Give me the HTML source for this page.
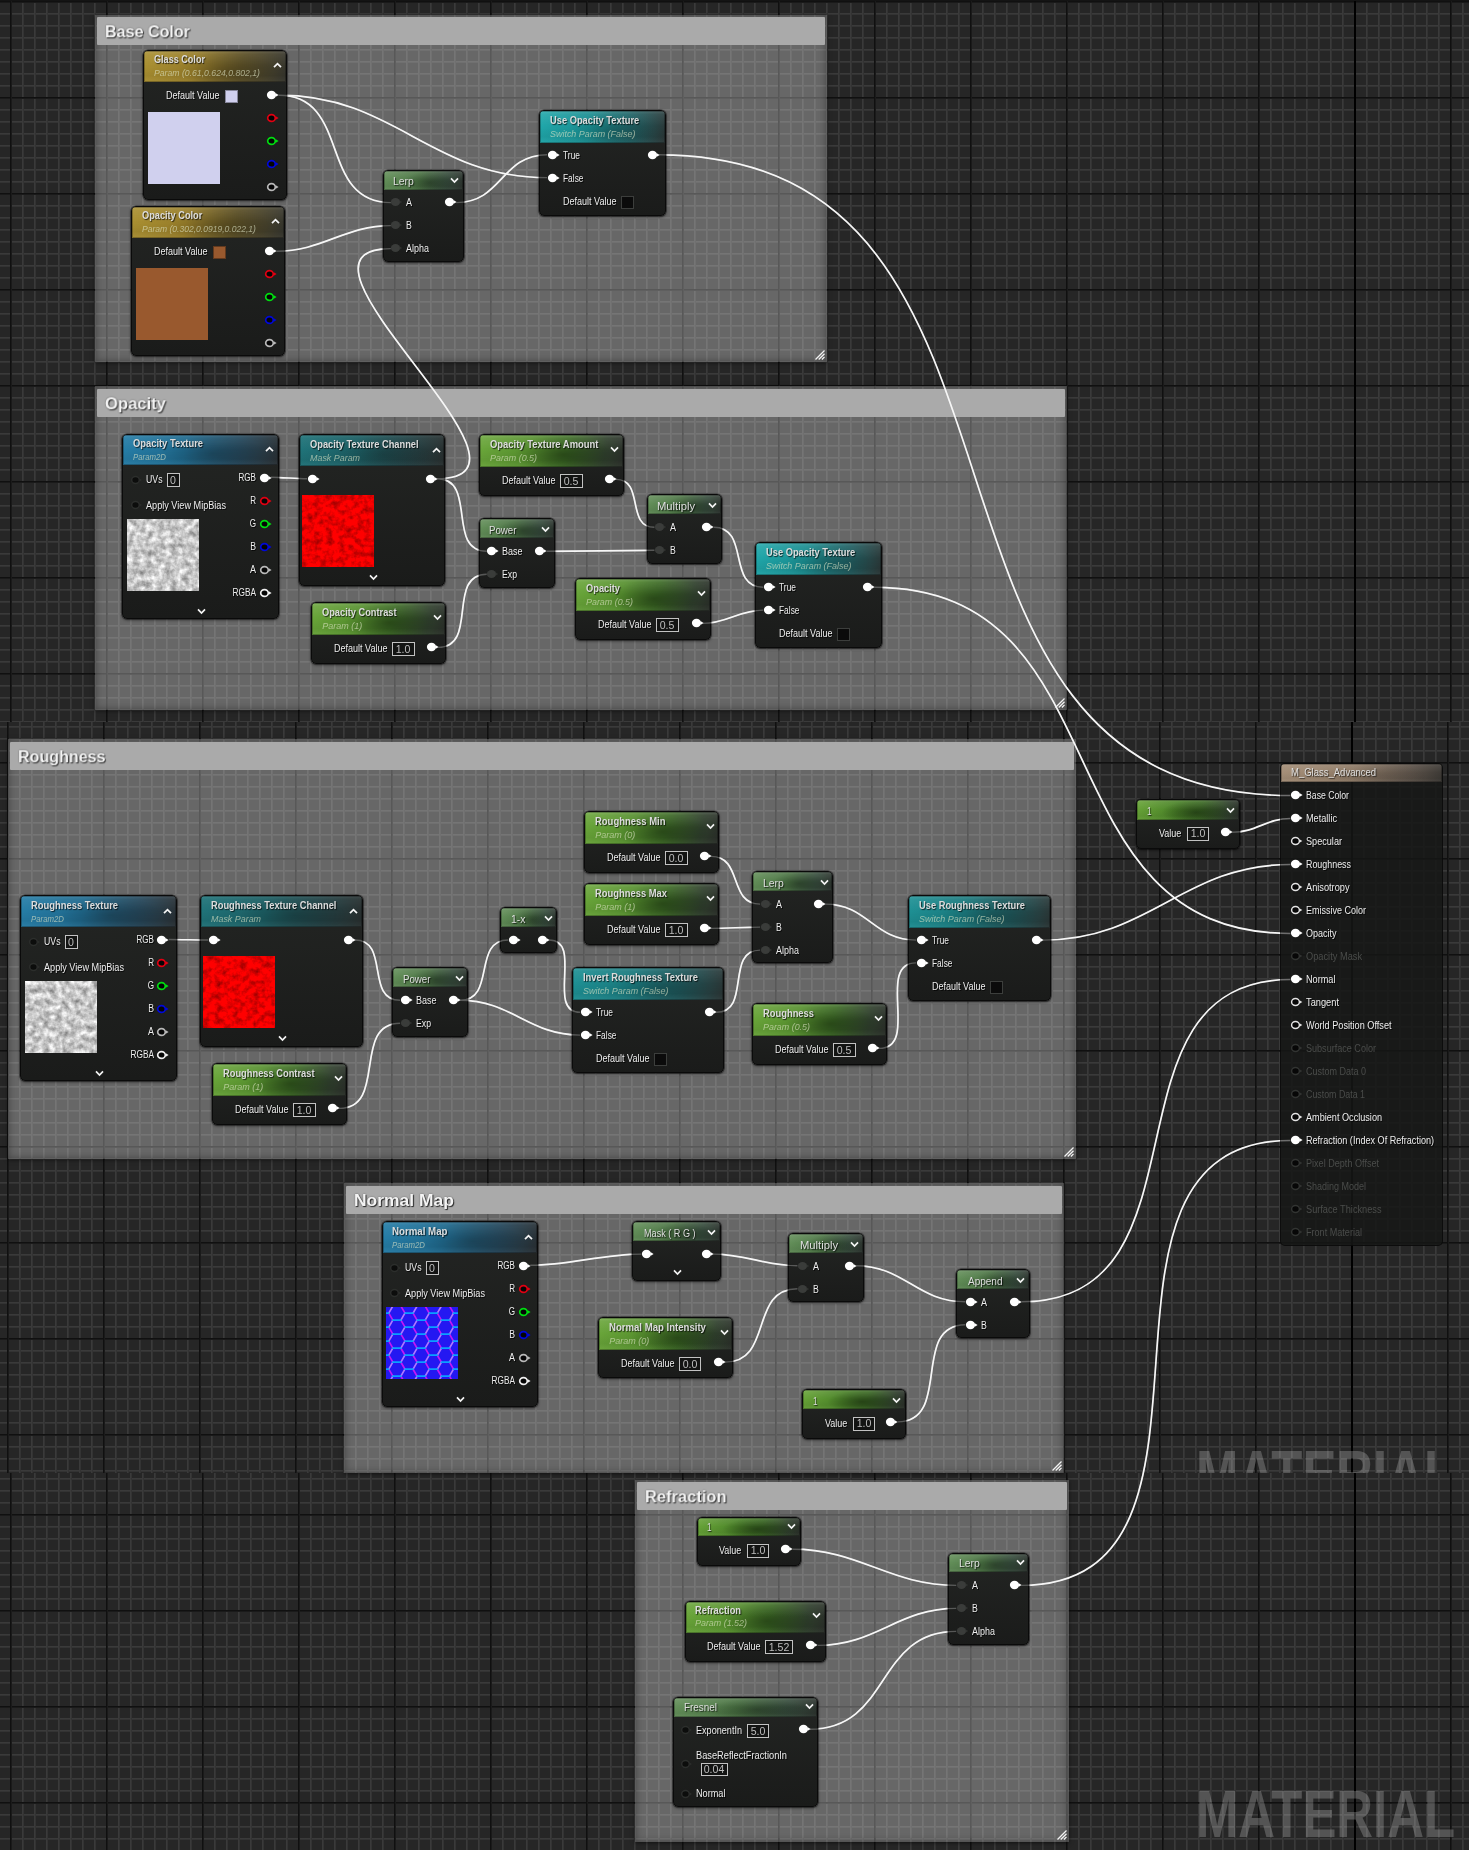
<!DOCTYPE html>
<html lang="en"><head><meta charset="utf-8"><title>M_Glass_Advanced - Material Graph</title>
<style>
html,body{margin:0;padding:0;background:#262626}
body{width:1469px;height:1850px;position:relative;overflow:hidden;font-family:"Liberation Sans",sans-serif}
.bg{position:absolute;left:0;width:1469px;overflow:hidden;background-color:#262626;
background-image:linear-gradient(90deg,#101010 1px,#1a1a1a 1px,#1a1a1a 2px,transparent 2px),linear-gradient(#101010 1px,#1a1a1a 1px,#1a1a1a 2px,transparent 2px),linear-gradient(90deg,#3a3a3a 1px,#333333 1px,#333333 2px,transparent 2px),linear-gradient(#3a3a3a 1px,#333333 1px,#333333 2px,transparent 2px);
background-size:96px 96px,96px 96px,12px 12px,12px 12px}
.bg i{position:absolute;top:0;bottom:0;width:2px;background:#000}
.wm{position:absolute;font-weight:bold;font-size:66.4px;line-height:1;color:rgba(255,255,255,0.215);white-space:nowrap;transform-origin:0 0;letter-spacing:0}
.c{position:absolute;box-sizing:border-box}
.cb{position:absolute;left:0;top:0;right:0;bottom:0;background:rgba(255,255,255,0.30);box-shadow:inset 0 0 7px 1px rgba(0,0,0,0.34),0 1px 4px rgba(0,0,0,0.55)}
.ch{position:absolute;left:2px;right:2px;height:28px;background:#aaaaaa;border-radius:1px}
.ct{font-weight:bold;font-size:17.4px;color:#f4f4f4;text-shadow:1px 1px 1px rgba(0,0,0,0.75),0 0 2px rgba(0,0,0,0.4)}
.grip{position:absolute;right:2px;bottom:2px}
.t{position:absolute;white-space:nowrap;line-height:1;display:block}
.n{position:absolute;box-sizing:border-box;border:1px solid #0a0a0a;border-radius:5px;background:linear-gradient(#232523,#1a1b1a);box-shadow:0 0 0 0.6px rgba(0,0,0,0.55),0 1px 3px rgba(0,0,0,0.6);overflow:hidden}
.n.res{background:rgba(22,23,21,0.84);border-color:rgba(0,0,0,0.5);box-shadow:none}
.in{position:absolute;width:0;height:0;will-change:transform}
.h{position:absolute;left:0;top:0;right:0;box-shadow:inset 0 0 0 1px rgba(0,0,0,0.28)}
.h.gold{background:linear-gradient(rgba(255,255,255,0.16) 0,rgba(255,255,255,0.072) 10%,rgba(255,255,255,0) 48%,rgba(0,0,0,0.06) 80%,rgba(255,255,255,0.03) 100%),radial-gradient(ellipse 34% 60% at 58% 62%,rgba(0,0,0,0.18),rgba(0,0,0,0) 100%),linear-gradient(100deg,#ab9132 0%,#967c29 36%,#5c5026 68%,#34342d 100%)}
.h.green{background:linear-gradient(rgba(255,255,255,0.2) 0,rgba(255,255,255,0.090) 10%,rgba(255,255,255,0) 48%,rgba(0,0,0,0.06) 80%,rgba(255,255,255,0.03) 100%),radial-gradient(ellipse 34% 60% at 58% 62%,rgba(0,0,0,0.34),rgba(0,0,0,0) 100%),linear-gradient(100deg,#6aa63a 0%,#56902e 35%,#3f7026 60%,#2e3e2b 86%,#2a2e29 100%)}
.h.green2{background:linear-gradient(rgba(255,255,255,0.2) 0,rgba(255,255,255,0.090) 10%,rgba(255,255,255,0) 48%,rgba(0,0,0,0.06) 80%,rgba(255,255,255,0.03) 100%),radial-gradient(ellipse 34% 60% at 58% 62%,rgba(0,0,0,0.4),rgba(0,0,0,0) 100%),linear-gradient(100deg,#68a438 0%,#4a8228 40%,#3f7026 62%,#2e3e2b 88%,#2a2e29 100%)}
.h.mgreen{background:linear-gradient(rgba(255,255,255,0.22) 0,rgba(255,255,255,0.099) 10%,rgba(255,255,255,0) 48%,rgba(0,0,0,0.06) 80%,rgba(255,255,255,0.03) 100%),radial-gradient(ellipse 34% 60% at 58% 62%,rgba(0,0,0,0.3),rgba(0,0,0,0) 100%),linear-gradient(100deg,#64905a 0%,#4b7444 45%,#364c3c 78%,#2b312d 100%)}
.h.teal{background:linear-gradient(rgba(255,255,255,0.18) 0,rgba(255,255,255,0.081) 10%,rgba(255,255,255,0) 48%,rgba(0,0,0,0.06) 80%,rgba(255,255,255,0.03) 100%),radial-gradient(ellipse 34% 60% at 58% 62%,rgba(0,0,0,0.16),rgba(0,0,0,0) 100%),linear-gradient(100deg,#20a8ab 0%,#1a8d90 40%,#1f6063 72%,#2a3535 100%)}
.h.teal2{background:linear-gradient(rgba(255,255,255,0.16) 0,rgba(255,255,255,0.072) 10%,rgba(255,255,255,0) 48%,rgba(0,0,0,0.06) 80%,rgba(255,255,255,0.03) 100%),radial-gradient(ellipse 34% 60% at 58% 62%,rgba(0,0,0,0.16),rgba(0,0,0,0) 100%),linear-gradient(100deg,#1e9195 0%,#1a797d 40%,#1f5659 72%,#2a3434 100%)}
.h.dteal{background:linear-gradient(rgba(255,255,255,0.12) 0,rgba(255,255,255,0.054) 10%,rgba(255,255,255,0) 48%,rgba(0,0,0,0.06) 80%,rgba(255,255,255,0.03) 100%),radial-gradient(ellipse 34% 60% at 58% 62%,rgba(0,0,0,0.18),rgba(0,0,0,0) 100%),linear-gradient(100deg,#20747a 0%,#1c5e63 40%,#234144 75%,#282e2e 100%)}
.h.blue{background:linear-gradient(rgba(255,255,255,0.14) 0,rgba(255,255,255,0.063) 10%,rgba(255,255,255,0) 48%,rgba(0,0,0,0.06) 80%,rgba(255,255,255,0.03) 100%),radial-gradient(ellipse 34% 60% at 58% 62%,rgba(0,0,0,0.2),rgba(0,0,0,0) 100%),linear-gradient(100deg,#267ea8 0%,#206a8e 40%,#25485c 74%,#292f33 100%)}
.h.tan{background:linear-gradient(rgba(255,255,255,0.16) 0,rgba(255,255,255,0.072) 10%,rgba(255,255,255,0) 48%,rgba(0,0,0,0.06) 80%,rgba(255,255,255,0.03) 100%),radial-gradient(ellipse 34% 60% at 58% 62%,rgba(0,0,0,0.1),rgba(0,0,0,0) 100%),linear-gradient(100deg,#a58f78 0%,#907c68 45%,#5c5249 80%,#3b3834 100%)}
.tb{font-weight:bold;font-size:10.5px;color:#dcdcdc;text-shadow:1px 1px 1px rgba(0,0,0,0.7)}
.tr{font-size:10.5px;color:#dedede;text-shadow:1px 1px 1px rgba(0,0,0,0.7)}
.ts{font-style:italic;font-size:9px;color:rgba(225,230,200,0.62)}
.lb{font-size:10px;color:#ededed;text-shadow:1px 1px 0 rgba(0,0,0,0.8)}
.vb{font-size:11.5px;color:#bdbdbd}
.p{position:absolute;overflow:visible}
.vbx{position:absolute;box-sizing:border-box;border:1px solid #c2c2c2;background:#131413}
.cbx{position:absolute;box-sizing:border-box;width:13px;height:13px;border:1px solid #3c3e3c;background:#0b0b0b}
.sw{position:absolute;width:13px;height:13px;box-sizing:border-box;border:1px solid rgba(0,0,0,0.35)}
.pv{position:absolute;width:72px;height:72px;display:block;overflow:hidden}
.pv svg{display:block}
svg.w{position:absolute;left:0;top:0}
</style></head>
<body>
<div class="bg" style="top:0px;height:722px;background-position:10px 0,0 1px,10px 0,0 1px"><i style="left:1354px"></i></div>
<div class="bg" style="top:722px;height:751px;background-position:7px 0,0 40px,7px 0,0 4px"><i style="left:1351px"></i></div>
<div class="bg" style="top:1473px;height:377px;background-position:10px 0,0 41px,10px 0,0 5px"><i style="left:1354px"></i></div>
<div style="position:absolute;left:0;top:0;width:1469px;height:1px;background:#141414"></div>
<div style="position:absolute;left:0;top:1440px;width:1469px;height:33px;overflow:hidden"><span class="wm" style="left:1195.5px;top:0.5px;transform:scaleX(0.766)">MATERIAL</span></div>
<span class="wm" style="left:1195.5px;top:1780.6px;transform:scaleX(0.766)">MATERIAL</span>
<div class="c" style="left:95px;top:15px;width:732px;height:347px"><div class="cb"></div><div class="ch" style="top:2px"></div><div class="in"><span class="t ct" style="left:9.9px;top:16.9px;transform:translateY(-50%) scaleX(0.925);transform-origin:0 50%;">Base Color</span></div><svg class="grip" width="10" height="10" viewBox="0 0 10 10"><path d="M0.5 9.5L9.5 0.5M3.7 9.5L9.5 3.7M6.9 9.5L9.5 6.9" stroke="#f4f4f4" stroke-width="1.3" fill="none"/></svg></div>
<div class="c" style="left:95px;top:386px;width:972px;height:324px"><div class="cb"></div><div class="ch" style="top:3px"></div><div class="in"><span class="t ct" style="left:9.9px;top:17.9px;transform:translateY(-50%) scaleX(0.956);transform-origin:0 50%;">Opacity</span></div><svg class="grip" width="10" height="10" viewBox="0 0 10 10"><path d="M0.5 9.5L9.5 0.5M3.7 9.5L9.5 3.7M6.9 9.5L9.5 6.9" stroke="#f4f4f4" stroke-width="1.3" fill="none"/></svg></div>
<div class="c" style="left:8px;top:739px;width:1068px;height:420px"><div class="cb"></div><div class="ch" style="top:3px"></div><div class="in"><span class="t ct" style="left:9.9px;top:17.9px;transform:translateY(-50%) scaleX(0.924);transform-origin:0 50%;">Roughness</span></div><svg class="grip" width="10" height="10" viewBox="0 0 10 10"><path d="M0.5 9.5L9.5 0.5M3.7 9.5L9.5 3.7M6.9 9.5L9.5 6.9" stroke="#f4f4f4" stroke-width="1.3" fill="none"/></svg></div>
<div class="c" style="left:344px;top:1183px;width:720px;height:290px"><div class="cb"></div><div class="ch" style="top:3px"></div><div class="in"><span class="t ct" style="left:9.9px;top:17.9px;transform:translateY(-50%) scaleX(1.004);transform-origin:0 50%;">Normal Map</span></div><svg class="grip" width="10" height="10" viewBox="0 0 10 10"><path d="M0.5 9.5L9.5 0.5M3.7 9.5L9.5 3.7M6.9 9.5L9.5 6.9" stroke="#f4f4f4" stroke-width="1.3" fill="none"/></svg></div>
<div class="c" style="left:635px;top:1480px;width:434px;height:362px"><div class="cb"></div><div class="ch" style="top:2px"></div><div class="in"><span class="t ct" style="left:9.9px;top:16.9px;transform:translateY(-50%) scaleX(0.947);transform-origin:0 50%;">Refraction</span></div><svg class="grip" width="10" height="10" viewBox="0 0 10 10"><path d="M0.5 9.5L9.5 0.5M3.7 9.5L9.5 3.7M6.9 9.5L9.5 6.9" stroke="#f4f4f4" stroke-width="1.3" fill="none"/></svg></div>
<svg class="w" width="1469" height="1850" viewBox="0 0 1469 1850"><g fill="none" stroke="#f4f4f4" stroke-width="1.7">
<path d="M278.6 95.2C351.8 95.2 317.6 202.6 390.8 202.6"/>
<path d="M278.6 95.2C395.5 95.2 430.1 177.6 547.0 177.6"/>
<path d="M276.5 251.2C323.1 251.2 344.2 225.6 390.8 225.6"/>
<path d="M456.3 202.6C502.5 202.6 500.8 154.8 547.0 154.8"/>
<path d="M658.5 154.8C1082.7 154.8 866.2 795.5 1290.4 795.5"/>
<path d="M437.0 478.7C566.0 478.7 261.8 248.6 390.8 248.6"/>
<path d="M270.8 477.3C283.3 477.3 294.5 478.7 307.0 478.7"/>
<path d="M437.0 478.7C477.8 478.7 445.9 551.3 486.7 551.3"/>
<path d="M438.2 647.4C478.7 647.4 446.2 574.3 486.7 574.3"/>
<path d="M546.7 551.3C582.9 551.3 618.2 550.3 654.4 550.3"/>
<path d="M616.0 479.4C644.8 479.4 625.6 527.3 654.4 527.3"/>
<path d="M713.8 527.3C750.3 527.3 726.7 587.3 763.2 587.3"/>
<path d="M702.9 623.4C727.4 623.4 738.7 610.1 763.2 610.1"/>
<path d="M874.4 587.3C1128.5 587.3 1036.3 933.5 1290.4 933.5"/>
<path d="M168.9 939.5C182.2 939.5 194.9 940.0 208.2 940.0"/>
<path d="M354.9 940.0C390.1 940.0 364.9 1000.3 400.1 1000.3"/>
<path d="M339.2 1108.4C387.9 1108.4 351.4 1023.3 400.1 1023.3"/>
<path d="M460.1 1000.3C496.2 1000.3 472.1 940.0 508.2 940.0"/>
<path d="M460.1 1000.3C511.7 1000.3 528.5 1035.1 580.1 1035.1"/>
<path d="M549.2 940.0C583.6 940.0 545.7 1012.3 580.1 1012.3"/>
<path d="M716.3 1012.3C751.6 1012.3 724.8 950.1 760.1 950.1"/>
<path d="M711.1 856.4C743.3 856.4 727.9 904.1 760.1 904.1"/>
<path d="M711.1 928.4C727.9 928.4 743.3 927.1 760.1 927.1"/>
<path d="M825.3 904.1C867.6 904.1 873.8 940.1 916.1 940.1"/>
<path d="M879.3 1048.4C920.1 1048.4 875.3 962.9 916.1 962.9"/>
<path d="M1043.1 940.1C1150.7 940.1 1182.8 864.5 1290.4 864.5"/>
<path d="M1232.3 832.3C1256.3 832.3 1266.4 818.5 1290.4 818.5"/>
<path d="M530.3 1265.3C571.1 1265.3 600.6 1254.1 641.4 1254.1"/>
<path d="M713.1 1254.1C745.1 1254.1 765.4 1265.8 797.4 1265.8"/>
<path d="M725.1 1362.1C773.6 1362.1 748.9 1288.8 797.4 1288.8"/>
<path d="M856.2 1265.8C904.6 1265.8 916.9 1301.8 965.3 1301.8"/>
<path d="M897.6 1421.9C952.5 1421.9 910.4 1324.8 965.3 1324.8"/>
<path d="M1021.5 1301.8C1218.6 1301.8 1093.3 979.5 1290.4 979.5"/>
<path d="M792.7 1549.2C859.3 1549.2 889.6 1585.4 956.2 1585.4"/>
<path d="M817.9 1645.4C876.3 1645.4 897.8 1608.4 956.2 1608.4"/>
<path d="M810.0 1729.2C891.3 1729.2 874.9 1631.4 956.2 1631.4"/>
<path d="M1021.3 1585.4C1259.3 1585.4 1052.4 1140.5 1290.4 1140.5"/>
</g></svg>
<div class="n " style="left:143px;top:50px;width:144px;height:150px"><div class="h gold" style="height:31.3px"></div><div class="in" style="left:-1.0px;top:-1.0px"><span class="t tb" style="left:11.0px;top:9.4px;transform:translateY(-50%) scaleX(0.865);transform-origin:0 50%;">Glass Color</span><span class="t ts" style="left:11.0px;top:23.1px;transform:translateY(-50%) scaleX(0.963);transform-origin:0 50%;">Param (0.61,0.624,0.802,1)</span><svg class="p" style="left:129.9px;top:12.2px" width="9" height="7" viewBox="0 0 9 7"><path d="M1 5.2 L4.5 1.6 L8 5.2" fill="none" stroke="#f4f4f4" stroke-width="1.7"/></svg><svg class="p" style="left:122.1px;top:39.2px" width="15" height="12" viewBox="0 0 15 12"><ellipse cx="6.5" cy="6" rx="4.6" ry="4.2" fill="#fff"/><path d="M10.8 4.2 L13.6 6 L10.8 7.8z" fill="#fff"/></svg><svg class="p" style="left:122.1px;top:62.2px" width="15" height="12" viewBox="0 0 15 12"><ellipse cx="6.5" cy="6" rx="3.8" ry="3.4" fill="#050505" stroke="#e00012" stroke-width="1.7"/><path d="M10.8 4.2 L13.6 6 L10.8 7.8z" fill="#e00012"/></svg><svg class="p" style="left:122.1px;top:85.2px" width="15" height="12" viewBox="0 0 15 12"><ellipse cx="6.5" cy="6" rx="3.8" ry="3.4" fill="#050505" stroke="#00dd10" stroke-width="1.7"/><path d="M10.8 4.2 L13.6 6 L10.8 7.8z" fill="#00dd10"/></svg><svg class="p" style="left:122.1px;top:108.2px" width="15" height="12" viewBox="0 0 15 12"><ellipse cx="6.5" cy="6" rx="3.8" ry="3.4" fill="#050505" stroke="#0008d8" stroke-width="1.7"/><path d="M10.8 4.2 L13.6 6 L10.8 7.8z" fill="#0008d8"/></svg><svg class="p" style="left:122.1px;top:131.2px" width="15" height="12" viewBox="0 0 15 12"><ellipse cx="6.5" cy="6" rx="3.8" ry="3.4" fill="#050505" stroke="#b8b8b8" stroke-width="1.7"/><path d="M10.8 4.2 L13.6 6 L10.8 7.8z" fill="#b8b8b8"/></svg><span class="sw" style="left:81.7px;top:39.8px;background:#d0d0ee"></span><span class="t lb" style="left:23.2px;top:46.0px;transform:translateY(-50%) scaleX(0.902);transform-origin:0 50%;">Default Value</span><span class="pv" style="left:5px;top:62px;background:#d0d0ee"></span></div></div>
<div class="n " style="left:131px;top:206px;width:154px;height:150px"><div class="h gold" style="height:31.3px"></div><div class="in" style="left:-1.0px;top:-1.0px"><span class="t tb" style="left:11.0px;top:9.4px;transform:translateY(-50%) scaleX(0.876);transform-origin:0 50%;">Opacity Color</span><span class="t ts" style="left:11.0px;top:23.1px;transform:translateY(-50%) scaleX(0.949);transform-origin:0 50%;">Param (0.302,0.0919,0.022,1)</span><svg class="p" style="left:139.8px;top:12.2px" width="9" height="7" viewBox="0 0 9 7"><path d="M1 5.2 L4.5 1.6 L8 5.2" fill="none" stroke="#f4f4f4" stroke-width="1.7"/></svg><svg class="p" style="left:132.0px;top:39.2px" width="15" height="12" viewBox="0 0 15 12"><ellipse cx="6.5" cy="6" rx="4.6" ry="4.2" fill="#fff"/><path d="M10.8 4.2 L13.6 6 L10.8 7.8z" fill="#fff"/></svg><svg class="p" style="left:132.0px;top:62.2px" width="15" height="12" viewBox="0 0 15 12"><ellipse cx="6.5" cy="6" rx="3.8" ry="3.4" fill="#050505" stroke="#e00012" stroke-width="1.7"/><path d="M10.8 4.2 L13.6 6 L10.8 7.8z" fill="#e00012"/></svg><svg class="p" style="left:132.0px;top:85.2px" width="15" height="12" viewBox="0 0 15 12"><ellipse cx="6.5" cy="6" rx="3.8" ry="3.4" fill="#050505" stroke="#00dd10" stroke-width="1.7"/><path d="M10.8 4.2 L13.6 6 L10.8 7.8z" fill="#00dd10"/></svg><svg class="p" style="left:132.0px;top:108.2px" width="15" height="12" viewBox="0 0 15 12"><ellipse cx="6.5" cy="6" rx="3.8" ry="3.4" fill="#050505" stroke="#0008d8" stroke-width="1.7"/><path d="M10.8 4.2 L13.6 6 L10.8 7.8z" fill="#0008d8"/></svg><svg class="p" style="left:132.0px;top:131.2px" width="15" height="12" viewBox="0 0 15 12"><ellipse cx="6.5" cy="6" rx="3.8" ry="3.4" fill="#050505" stroke="#b8b8b8" stroke-width="1.7"/><path d="M10.8 4.2 L13.6 6 L10.8 7.8z" fill="#b8b8b8"/></svg><span class="sw" style="left:81.7px;top:39.8px;background:#99592e"></span><span class="t lb" style="left:23.2px;top:46.0px;transform:translateY(-50%) scaleX(0.902);transform-origin:0 50%;">Default Value</span><span class="pv" style="left:5px;top:62px;background:#99592e"></span></div></div>
<div class="n " style="left:383px;top:170px;width:81px;height:92px"><div class="h mgreen" style="height:18.6px"></div><div class="in" style="left:-0.7px;top:-0.7px"><span class="t tr" style="left:9.8px;top:10.9px;transform:translateY(-50%) scaleX(0.985);transform-origin:0 50%;">Lerp</span><svg class="p" style="left:67.0px;top:6.5px" width="9" height="7" viewBox="0 0 9 7"><path d="M1 1.4 L4.5 5 L8 1.4" fill="none" stroke="#f4f4f4" stroke-width="1.7"/></svg><svg class="p" style="left:6.0px;top:26.3px" width="15" height="12" viewBox="0 0 15 12"><ellipse cx="6.5" cy="6" rx="4.6" ry="4.0" fill="#3a3c3a"/><path d="M10.8 4.4 L13.2 6 L10.8 7.6z" fill="#303230"/></svg><span class="t lb" style="left:23.0px;top:32.8px;transform:translateY(-50%) scaleX(0.900);transform-origin:0 50%;">A</span><svg class="p" style="left:6.0px;top:49.3px" width="15" height="12" viewBox="0 0 15 12"><ellipse cx="6.5" cy="6" rx="4.6" ry="4.0" fill="#3a3c3a"/><path d="M10.8 4.4 L13.2 6 L10.8 7.6z" fill="#303230"/></svg><span class="t lb" style="left:23.0px;top:55.8px;transform:translateY(-50%) scaleX(0.870);transform-origin:0 50%;">B</span><svg class="p" style="left:6.0px;top:72.3px" width="15" height="12" viewBox="0 0 15 12"><ellipse cx="6.5" cy="6" rx="4.6" ry="4.0" fill="#3a3c3a"/><path d="M10.8 4.4 L13.2 6 L10.8 7.6z" fill="#303230"/></svg><span class="t lb" style="left:23.0px;top:78.8px;transform:translateY(-50%) scaleX(0.895);transform-origin:0 50%;">Alpha</span><svg class="p" style="left:59.5px;top:26.3px" width="15" height="12" viewBox="0 0 15 12"><ellipse cx="6.5" cy="6" rx="4.6" ry="4.2" fill="#fff"/><path d="M10.8 4.2 L13.6 6 L10.8 7.8z" fill="#fff"/></svg></div></div>
<div class="n " style="left:539px;top:110px;width:127px;height:106px"><div class="h teal" style="height:31.8px"></div><div class="in" style="left:-0.5px;top:-0.5px"><span class="t tb" style="left:10.2px;top:9.4px;transform:translateY(-50%) scaleX(0.886);transform-origin:0 50%;">Use Opacity Texture</span><span class="t ts" style="left:10.2px;top:23.1px;transform:translateY(-50%) scaleX(0.993);transform-origin:0 50%;">Switch Param (False)</span><svg class="p" style="left:6.0px;top:38.3px" width="15" height="12" viewBox="0 0 15 12"><ellipse cx="6.5" cy="6" rx="4.6" ry="4.2" fill="#fff"/><path d="M10.8 4.2 L13.6 6 L10.8 7.8z" fill="#fff"/></svg><span class="t lb" style="left:23.0px;top:44.8px;transform:translateY(-50%) scaleX(0.842);transform-origin:0 50%;">True</span><svg class="p" style="left:6.0px;top:61.1px" width="15" height="12" viewBox="0 0 15 12"><ellipse cx="6.5" cy="6" rx="4.6" ry="4.2" fill="#fff"/><path d="M10.8 4.2 L13.6 6 L10.8 7.8z" fill="#fff"/></svg><span class="t lb" style="left:23.0px;top:67.6px;transform:translateY(-50%) scaleX(0.838);transform-origin:0 50%;">False</span><span class="t lb" style="left:23.0px;top:91.4px;transform:translateY(-50%) scaleX(0.902);transform-origin:0 50%;">Default Value</span><span class="cbx" style="left:81.0px;top:84.7px"></span><svg class="p" style="left:105.5px;top:38.3px" width="15" height="12" viewBox="0 0 15 12"><ellipse cx="6.5" cy="6" rx="4.6" ry="4.2" fill="#fff"/><path d="M10.8 4.2 L13.6 6 L10.8 7.8z" fill="#fff"/></svg></div></div>
<div class="n " style="left:122px;top:434px;width:157px;height:185px"><div class="h blue" style="height:30.1px"></div><div class="in" style="left:-0.2px;top:-1.2px"><span class="t tb" style="left:10.2px;top:9.4px;transform:translateY(-50%) scaleX(0.891);transform-origin:0 50%;">Opacity Texture</span><span class="t ts" style="left:10.2px;top:23.1px;transform:translateY(-50%) scaleX(0.868);transform-origin:0 50%;">Param2D</span><svg class="p" style="left:142.0px;top:12.2px" width="9" height="7" viewBox="0 0 9 7"><path d="M1 5.2 L4.5 1.6 L8 5.2" fill="none" stroke="#f4f4f4" stroke-width="1.7"/></svg><svg class="p" style="left:134.5px;top:37.5px" width="15" height="12" viewBox="0 0 15 12"><ellipse cx="6.5" cy="6" rx="4.6" ry="4.2" fill="#fff"/><path d="M10.8 4.2 L13.6 6 L10.8 7.8z" fill="#fff"/></svg><svg class="p" style="left:134.5px;top:60.5px" width="15" height="12" viewBox="0 0 15 12"><ellipse cx="6.5" cy="6" rx="3.8" ry="3.4" fill="#050505" stroke="#e00012" stroke-width="1.7"/><path d="M10.8 4.2 L13.6 6 L10.8 7.8z" fill="#e00012"/></svg><svg class="p" style="left:134.5px;top:83.5px" width="15" height="12" viewBox="0 0 15 12"><ellipse cx="6.5" cy="6" rx="3.8" ry="3.4" fill="#050505" stroke="#00dd10" stroke-width="1.7"/><path d="M10.8 4.2 L13.6 6 L10.8 7.8z" fill="#00dd10"/></svg><svg class="p" style="left:134.5px;top:106.5px" width="15" height="12" viewBox="0 0 15 12"><ellipse cx="6.5" cy="6" rx="3.8" ry="3.4" fill="#050505" stroke="#0008d8" stroke-width="1.7"/><path d="M10.8 4.2 L13.6 6 L10.8 7.8z" fill="#0008d8"/></svg><svg class="p" style="left:134.5px;top:129.5px" width="15" height="12" viewBox="0 0 15 12"><ellipse cx="6.5" cy="6" rx="3.8" ry="3.4" fill="#050505" stroke="#b8b8b8" stroke-width="1.7"/><path d="M10.8 4.2 L13.6 6 L10.8 7.8z" fill="#b8b8b8"/></svg><svg class="p" style="left:134.5px;top:152.5px" width="15" height="12" viewBox="0 0 15 12"><ellipse cx="6.5" cy="6" rx="3.8" ry="3.4" fill="#050505" stroke="#f0f0f0" stroke-width="1.7"/><path d="M10.8 4.2 L13.6 6 L10.8 7.8z" fill="#f0f0f0"/></svg><span class="t lb" style="left:132.8px;top:43.8px;transform:translate(-100%,-50%) scaleX(0.808);transform-origin:100% 50%;">RGB</span><span class="t lb" style="left:132.8px;top:66.8px;transform:translate(-100%,-50%) scaleX(0.803);transform-origin:100% 50%;">R</span><span class="t lb" style="left:132.8px;top:89.8px;transform:translate(-100%,-50%) scaleX(0.810);transform-origin:100% 50%;">G</span><span class="t lb" style="left:132.8px;top:112.8px;transform:translate(-100%,-50%) scaleX(0.870);transform-origin:100% 50%;">B</span><span class="t lb" style="left:132.8px;top:135.8px;transform:translate(-100%,-50%) scaleX(0.900);transform-origin:100% 50%;">A</span><span class="t lb" style="left:132.8px;top:158.8px;transform:translate(-100%,-50%) scaleX(0.829);transform-origin:100% 50%;">RGBA</span><svg class="p" style="left:5.5px;top:39.5px" width="15" height="12" viewBox="0 0 15 12"><ellipse cx="6.5" cy="6" rx="3.8" ry="3.5" fill="#0c0d0c" stroke="#2c2e2c" stroke-width="1.4"/><path d="M10.8 4.6 L12.8 6 L10.8 7.4z" fill="#2c2e2c"/></svg><span class="t lb" style="left:22.5px;top:46.2px;transform:translateY(-50%) scaleX(0.873);transform-origin:0 50%;">UVs</span><span class="vbx" style="left:43.5px;top:39.3px;width:13.5px;height:13.7px"><span class="t vb" style="left:50%;top:6.6px;transform:translate(-50%,-50%) scaleX(0.92)">0</span></span><svg class="p" style="left:5.5px;top:64.7px" width="15" height="12" viewBox="0 0 15 12"><ellipse cx="6.5" cy="6" rx="3.8" ry="3.5" fill="#0c0d0c" stroke="#2c2e2c" stroke-width="1.4"/><path d="M10.8 4.6 L12.8 6 L10.8 7.4z" fill="#2c2e2c"/></svg><span class="t lb" style="left:22.5px;top:71.5px;transform:translateY(-50%) scaleX(0.913);transform-origin:0 50%;">Apply View MipBias</span><span class="pv" style="left:4px;top:85px"><svg width="72" height="72" viewBox="0 0 72 72"><filter id="nz1" x="0" y="0" width="100%" height="100%" color-interpolation-filters="sRGB"><feTurbulence type="fractalNoise" baseFrequency="0.16" numOctaves="3" seed="3"/><feColorMatrix type="matrix" values="0.70 0 0 0 0.43  0.70 0 0 0 0.43  0.70 0 0 0 0.43  0 0 0 0 1"/></filter><rect width="72" height="72" filter="url(#nz1)"/></svg></span><svg class="p" style="left:73.8px;top:173.7px" width="9" height="7" viewBox="0 0 9 7"><path d="M1 1.4 L4.5 5 L8 1.4" fill="none" stroke="#f4f4f4" stroke-width="1.7"/></svg></div></div>
<div class="n " style="left:299px;top:434px;width:146px;height:152px"><div class="h dteal" style="height:31.0px"></div><div class="in" style="left:-0.5px;top:-0.3px"><span class="t tb" style="left:10.2px;top:9.4px;transform:translateY(-50%) scaleX(0.883);transform-origin:0 50%;">Opacity Texture Channel</span><span class="t ts" style="left:10.2px;top:23.1px;transform:translateY(-50%) scaleX(0.990);transform-origin:0 50%;">Mask Param</span><svg class="p" style="left:131.5px;top:12.2px" width="9" height="7" viewBox="0 0 9 7"><path d="M1 5.2 L4.5 1.6 L8 5.2" fill="none" stroke="#f4f4f4" stroke-width="1.7"/></svg><svg class="p" style="left:6.0px;top:38.0px" width="15" height="12" viewBox="0 0 15 12"><ellipse cx="6.5" cy="6" rx="4.6" ry="4.2" fill="#fff"/><path d="M10.8 4.2 L13.6 6 L10.8 7.8z" fill="#fff"/></svg><svg class="p" style="left:124.0px;top:38.0px" width="15" height="12" viewBox="0 0 15 12"><ellipse cx="6.5" cy="6" rx="4.6" ry="4.2" fill="#fff"/><path d="M10.8 4.2 L13.6 6 L10.8 7.8z" fill="#fff"/></svg><span class="pv" style="left:1.9px;top:60px"><svg width="72" height="72" viewBox="0 0 72 72"><filter id="nz2" x="0" y="0" width="100%" height="100%" color-interpolation-filters="sRGB"><feTurbulence type="fractalNoise" baseFrequency="0.16" numOctaves="3" seed="8"/><feColorMatrix type="matrix" values="0.85 0 0 0 0.50  0 0 0 0 0  0 0 0 0 0  0 0 0 0 1"/></filter><rect width="72" height="72" filter="url(#nz2)"/></svg></span><svg class="p" style="left:68.6px;top:138.9px" width="9" height="7" viewBox="0 0 9 7"><path d="M1 1.4 L4.5 5 L8 1.4" fill="none" stroke="#f4f4f4" stroke-width="1.7"/></svg></div></div>
<div class="n " style="left:311px;top:602px;width:135px;height:62px"><div class="h green" style="height:32.3px"></div><div class="in" style="left:-0.3px;top:0.0px"><span class="t tb" style="left:10.2px;top:9.4px;transform:translateY(-50%) scaleX(0.881);transform-origin:0 50%;">Opacity Contrast</span><span class="t ts" style="left:10.2px;top:23.1px;transform:translateY(-50%) scaleX(1.000);transform-origin:0 50%;">Param (1)</span><svg class="p" style="left:120.5px;top:11.4px" width="9" height="7" viewBox="0 0 9 7"><path d="M1 1.4 L4.5 5 L8 1.4" fill="none" stroke="#f4f4f4" stroke-width="1.7"/></svg><svg class="p" style="left:113.0px;top:38.4px" width="15" height="12" viewBox="0 0 15 12"><ellipse cx="6.5" cy="6" rx="4.6" ry="4.2" fill="#fff"/><path d="M10.8 4.2 L13.6 6 L10.8 7.8z" fill="#fff"/></svg><span class="vbx" style="left:80.2px;top:39.1px;width:22.5px;height:13.7px"><span class="t vb" style="left:50%;top:6.6px;transform:translate(-50%,-50%) scaleX(0.92)">1.0</span></span><span class="t lb" style="left:21.8px;top:46.0px;transform:translateY(-50%) scaleX(0.902);transform-origin:0 50%;">Default Value</span></div></div>
<div class="n " style="left:479px;top:434px;width:145px;height:62px"><div class="h green" style="height:32.3px"></div><div class="in" style="left:-0.2px;top:0.0px"><span class="t tb" style="left:10.2px;top:9.4px;transform:translateY(-50%) scaleX(0.898);transform-origin:0 50%;">Opacity Texture Amount</span><span class="t ts" style="left:10.2px;top:23.1px;transform:translateY(-50%) scaleX(0.989);transform-origin:0 50%;">Param (0.5)</span><svg class="p" style="left:130.2px;top:11.4px" width="9" height="7" viewBox="0 0 9 7"><path d="M1 1.4 L4.5 5 L8 1.4" fill="none" stroke="#f4f4f4" stroke-width="1.7"/></svg><svg class="p" style="left:122.7px;top:38.4px" width="15" height="12" viewBox="0 0 15 12"><ellipse cx="6.5" cy="6" rx="4.6" ry="4.2" fill="#fff"/><path d="M10.8 4.2 L13.6 6 L10.8 7.8z" fill="#fff"/></svg><span class="vbx" style="left:80.2px;top:39.1px;width:22.5px;height:13.7px"><span class="t vb" style="left:50%;top:6.6px;transform:translate(-50%,-50%) scaleX(0.92)">0.5</span></span><span class="t lb" style="left:21.8px;top:46.0px;transform:translateY(-50%) scaleX(0.902);transform-origin:0 50%;">Default Value</span></div></div>
<div class="n " style="left:479px;top:518px;width:76px;height:70px"><div class="h mgreen" style="height:19.3px"></div><div class="in" style="left:-0.8px;top:0.0px"><span class="t tr" style="left:9.8px;top:10.9px;transform:translateY(-50%) scaleX(0.924);transform-origin:0 50%;">Power</span><svg class="p" style="left:61.5px;top:6.5px" width="9" height="7" viewBox="0 0 9 7"><path d="M1 1.4 L4.5 5 L8 1.4" fill="none" stroke="#f4f4f4" stroke-width="1.7"/></svg><svg class="p" style="left:6.0px;top:26.3px" width="15" height="12" viewBox="0 0 15 12"><ellipse cx="6.5" cy="6" rx="4.6" ry="4.2" fill="#fff"/><path d="M10.8 4.2 L13.6 6 L10.8 7.8z" fill="#fff"/></svg><span class="t lb" style="left:23.0px;top:32.8px;transform:translateY(-50%) scaleX(0.899);transform-origin:0 50%;">Base</span><svg class="p" style="left:6.0px;top:49.3px" width="15" height="12" viewBox="0 0 15 12"><ellipse cx="6.5" cy="6" rx="4.6" ry="4.0" fill="#3a3c3a"/><path d="M10.8 4.4 L13.2 6 L10.8 7.6z" fill="#303230"/></svg><span class="t lb" style="left:23.0px;top:55.8px;transform:translateY(-50%) scaleX(0.870);transform-origin:0 50%;">Exp</span><svg class="p" style="left:54.0px;top:26.3px" width="15" height="12" viewBox="0 0 15 12"><ellipse cx="6.5" cy="6" rx="4.6" ry="4.2" fill="#fff"/><path d="M10.8 4.2 L13.6 6 L10.8 7.8z" fill="#fff"/></svg></div></div>
<div class="n " style="left:647px;top:494px;width:75px;height:70px"><div class="h mgreen" style="height:19.3px"></div><div class="in" style="left:-1.1px;top:0.0px"><span class="t tr" style="left:9.8px;top:10.9px;transform:translateY(-50%) scaleX(1.068);transform-origin:0 50%;">Multiply</span><svg class="p" style="left:60.9px;top:6.5px" width="9" height="7" viewBox="0 0 9 7"><path d="M1 1.4 L4.5 5 L8 1.4" fill="none" stroke="#f4f4f4" stroke-width="1.7"/></svg><svg class="p" style="left:6.0px;top:26.3px" width="15" height="12" viewBox="0 0 15 12"><ellipse cx="6.5" cy="6" rx="4.6" ry="4.0" fill="#3a3c3a"/><path d="M10.8 4.4 L13.2 6 L10.8 7.6z" fill="#303230"/></svg><span class="t lb" style="left:23.0px;top:32.8px;transform:translateY(-50%) scaleX(0.900);transform-origin:0 50%;">A</span><svg class="p" style="left:6.0px;top:49.3px" width="15" height="12" viewBox="0 0 15 12"><ellipse cx="6.5" cy="6" rx="4.6" ry="4.0" fill="#3a3c3a"/><path d="M10.8 4.4 L13.2 6 L10.8 7.6z" fill="#303230"/></svg><span class="t lb" style="left:23.0px;top:55.8px;transform:translateY(-50%) scaleX(0.870);transform-origin:0 50%;">B</span><svg class="p" style="left:53.4px;top:26.3px" width="15" height="12" viewBox="0 0 15 12"><ellipse cx="6.5" cy="6" rx="4.6" ry="4.2" fill="#fff"/><path d="M10.8 4.2 L13.6 6 L10.8 7.8z" fill="#fff"/></svg></div></div>
<div class="n " style="left:575px;top:578px;width:136px;height:62px"><div class="h green" style="height:32.3px"></div><div class="in" style="left:-0.4px;top:0.0px"><span class="t tb" style="left:10.2px;top:9.4px;transform:translateY(-50%) scaleX(0.883);transform-origin:0 50%;">Opacity</span><span class="t ts" style="left:10.2px;top:23.1px;transform:translateY(-50%) scaleX(0.989);transform-origin:0 50%;">Param (0.5)</span><svg class="p" style="left:121.3px;top:11.4px" width="9" height="7" viewBox="0 0 9 7"><path d="M1 1.4 L4.5 5 L8 1.4" fill="none" stroke="#f4f4f4" stroke-width="1.7"/></svg><svg class="p" style="left:113.8px;top:38.4px" width="15" height="12" viewBox="0 0 15 12"><ellipse cx="6.5" cy="6" rx="4.6" ry="4.2" fill="#fff"/><path d="M10.8 4.2 L13.6 6 L10.8 7.8z" fill="#fff"/></svg><span class="vbx" style="left:80.2px;top:39.1px;width:22.5px;height:13.7px"><span class="t vb" style="left:50%;top:6.6px;transform:translate(-50%,-50%) scaleX(0.92)">0.5</span></span><span class="t lb" style="left:21.8px;top:46.0px;transform:translateY(-50%) scaleX(0.902);transform-origin:0 50%;">Default Value</span></div></div>
<div class="n " style="left:755px;top:542px;width:127px;height:106px"><div class="h teal" style="height:32.3px"></div><div class="in" style="left:-0.3px;top:0.0px"><span class="t tb" style="left:10.2px;top:9.4px;transform:translateY(-50%) scaleX(0.886);transform-origin:0 50%;">Use Opacity Texture</span><span class="t ts" style="left:10.2px;top:23.1px;transform:translateY(-50%) scaleX(0.993);transform-origin:0 50%;">Switch Param (False)</span><svg class="p" style="left:6.0px;top:38.3px" width="15" height="12" viewBox="0 0 15 12"><ellipse cx="6.5" cy="6" rx="4.6" ry="4.2" fill="#fff"/><path d="M10.8 4.2 L13.6 6 L10.8 7.8z" fill="#fff"/></svg><span class="t lb" style="left:23.0px;top:44.8px;transform:translateY(-50%) scaleX(0.842);transform-origin:0 50%;">True</span><svg class="p" style="left:6.0px;top:61.1px" width="15" height="12" viewBox="0 0 15 12"><ellipse cx="6.5" cy="6" rx="4.6" ry="4.2" fill="#fff"/><path d="M10.8 4.2 L13.6 6 L10.8 7.8z" fill="#fff"/></svg><span class="t lb" style="left:23.0px;top:67.6px;transform:translateY(-50%) scaleX(0.838);transform-origin:0 50%;">False</span><span class="t lb" style="left:23.0px;top:91.4px;transform:translateY(-50%) scaleX(0.902);transform-origin:0 50%;">Default Value</span><span class="cbx" style="left:81.0px;top:84.7px"></span><svg class="p" style="left:105.2px;top:38.3px" width="15" height="12" viewBox="0 0 15 12"><ellipse cx="6.5" cy="6" rx="4.6" ry="4.2" fill="#fff"/><path d="M10.8 4.2 L13.6 6 L10.8 7.8z" fill="#fff"/></svg></div></div>
<div class="n " style="left:20px;top:895px;width:157px;height:186px"><div class="h blue" style="height:31.3px"></div><div class="in" style="left:0.0px;top:0.0px"><span class="t tb" style="left:10.2px;top:9.4px;transform:translateY(-50%) scaleX(0.895);transform-origin:0 50%;">Roughness Texture</span><span class="t ts" style="left:10.2px;top:23.1px;transform:translateY(-50%) scaleX(0.868);transform-origin:0 50%;">Param2D</span><svg class="p" style="left:141.9px;top:12.2px" width="9" height="7" viewBox="0 0 9 7"><path d="M1 5.2 L4.5 1.6 L8 5.2" fill="none" stroke="#f4f4f4" stroke-width="1.7"/></svg><svg class="p" style="left:134.4px;top:37.5px" width="15" height="12" viewBox="0 0 15 12"><ellipse cx="6.5" cy="6" rx="4.6" ry="4.2" fill="#fff"/><path d="M10.8 4.2 L13.6 6 L10.8 7.8z" fill="#fff"/></svg><svg class="p" style="left:134.4px;top:60.5px" width="15" height="12" viewBox="0 0 15 12"><ellipse cx="6.5" cy="6" rx="3.8" ry="3.4" fill="#050505" stroke="#e00012" stroke-width="1.7"/><path d="M10.8 4.2 L13.6 6 L10.8 7.8z" fill="#e00012"/></svg><svg class="p" style="left:134.4px;top:83.5px" width="15" height="12" viewBox="0 0 15 12"><ellipse cx="6.5" cy="6" rx="3.8" ry="3.4" fill="#050505" stroke="#00dd10" stroke-width="1.7"/><path d="M10.8 4.2 L13.6 6 L10.8 7.8z" fill="#00dd10"/></svg><svg class="p" style="left:134.4px;top:106.5px" width="15" height="12" viewBox="0 0 15 12"><ellipse cx="6.5" cy="6" rx="3.8" ry="3.4" fill="#050505" stroke="#0008d8" stroke-width="1.7"/><path d="M10.8 4.2 L13.6 6 L10.8 7.8z" fill="#0008d8"/></svg><svg class="p" style="left:134.4px;top:129.5px" width="15" height="12" viewBox="0 0 15 12"><ellipse cx="6.5" cy="6" rx="3.8" ry="3.4" fill="#050505" stroke="#b8b8b8" stroke-width="1.7"/><path d="M10.8 4.2 L13.6 6 L10.8 7.8z" fill="#b8b8b8"/></svg><svg class="p" style="left:134.4px;top:152.5px" width="15" height="12" viewBox="0 0 15 12"><ellipse cx="6.5" cy="6" rx="3.8" ry="3.4" fill="#050505" stroke="#f0f0f0" stroke-width="1.7"/><path d="M10.8 4.2 L13.6 6 L10.8 7.8z" fill="#f0f0f0"/></svg><span class="t lb" style="left:132.7px;top:43.8px;transform:translate(-100%,-50%) scaleX(0.808);transform-origin:100% 50%;">RGB</span><span class="t lb" style="left:132.7px;top:66.8px;transform:translate(-100%,-50%) scaleX(0.803);transform-origin:100% 50%;">R</span><span class="t lb" style="left:132.7px;top:89.8px;transform:translate(-100%,-50%) scaleX(0.810);transform-origin:100% 50%;">G</span><span class="t lb" style="left:132.7px;top:112.8px;transform:translate(-100%,-50%) scaleX(0.870);transform-origin:100% 50%;">B</span><span class="t lb" style="left:132.7px;top:135.8px;transform:translate(-100%,-50%) scaleX(0.900);transform-origin:100% 50%;">A</span><span class="t lb" style="left:132.7px;top:158.8px;transform:translate(-100%,-50%) scaleX(0.829);transform-origin:100% 50%;">RGBA</span><svg class="p" style="left:5.5px;top:39.5px" width="15" height="12" viewBox="0 0 15 12"><ellipse cx="6.5" cy="6" rx="3.8" ry="3.5" fill="#0c0d0c" stroke="#2c2e2c" stroke-width="1.4"/><path d="M10.8 4.6 L12.8 6 L10.8 7.4z" fill="#2c2e2c"/></svg><span class="t lb" style="left:22.5px;top:46.2px;transform:translateY(-50%) scaleX(0.873);transform-origin:0 50%;">UVs</span><span class="vbx" style="left:43.5px;top:39.3px;width:13.5px;height:13.7px"><span class="t vb" style="left:50%;top:6.6px;transform:translate(-50%,-50%) scaleX(0.92)">0</span></span><svg class="p" style="left:5.5px;top:64.7px" width="15" height="12" viewBox="0 0 15 12"><ellipse cx="6.5" cy="6" rx="3.8" ry="3.5" fill="#0c0d0c" stroke="#2c2e2c" stroke-width="1.4"/><path d="M10.8 4.6 L12.8 6 L10.8 7.4z" fill="#2c2e2c"/></svg><span class="t lb" style="left:22.5px;top:71.5px;transform:translateY(-50%) scaleX(0.913);transform-origin:0 50%;">Apply View MipBias</span><span class="pv" style="left:4px;top:85px"><svg width="72" height="72" viewBox="0 0 72 72"><filter id="nz3" x="0" y="0" width="100%" height="100%" color-interpolation-filters="sRGB"><feTurbulence type="fractalNoise" baseFrequency="0.16" numOctaves="3" seed="5"/><feColorMatrix type="matrix" values="0.70 0 0 0 0.43  0.70 0 0 0 0.43  0.70 0 0 0 0.43  0 0 0 0 1"/></filter><rect width="72" height="72" filter="url(#nz3)"/></svg></span><svg class="p" style="left:73.7px;top:173.7px" width="9" height="7" viewBox="0 0 9 7"><path d="M1 1.4 L4.5 5 L8 1.4" fill="none" stroke="#f4f4f4" stroke-width="1.7"/></svg></div></div>
<div class="n " style="left:200px;top:895px;width:163px;height:152px"><div class="h dteal" style="height:31.3px"></div><div class="in" style="left:-0.3px;top:0.0px"><span class="t tb" style="left:10.2px;top:9.4px;transform:translateY(-50%) scaleX(0.886);transform-origin:0 50%;">Roughness Texture Channel</span><span class="t ts" style="left:10.2px;top:23.1px;transform:translateY(-50%) scaleX(0.990);transform-origin:0 50%;">Mask Param</span><svg class="p" style="left:148.2px;top:12.2px" width="9" height="7" viewBox="0 0 9 7"><path d="M1 5.2 L4.5 1.6 L8 5.2" fill="none" stroke="#f4f4f4" stroke-width="1.7"/></svg><svg class="p" style="left:6.0px;top:38.0px" width="15" height="12" viewBox="0 0 15 12"><ellipse cx="6.5" cy="6" rx="4.6" ry="4.2" fill="#fff"/><path d="M10.8 4.2 L13.6 6 L10.8 7.8z" fill="#fff"/></svg><svg class="p" style="left:140.7px;top:38.0px" width="15" height="12" viewBox="0 0 15 12"><ellipse cx="6.5" cy="6" rx="4.6" ry="4.2" fill="#fff"/><path d="M10.8 4.2 L13.6 6 L10.8 7.8z" fill="#fff"/></svg><span class="pv" style="left:1.9px;top:60px"><svg width="72" height="72" viewBox="0 0 72 72"><filter id="nz4" x="0" y="0" width="100%" height="100%" color-interpolation-filters="sRGB"><feTurbulence type="fractalNoise" baseFrequency="0.16" numOctaves="3" seed="11"/><feColorMatrix type="matrix" values="0.85 0 0 0 0.50  0 0 0 0 0  0 0 0 0 0  0 0 0 0 1"/></filter><rect width="72" height="72" filter="url(#nz4)"/></svg></span><svg class="p" style="left:76.9px;top:138.9px" width="9" height="7" viewBox="0 0 9 7"><path d="M1 1.4 L4.5 5 L8 1.4" fill="none" stroke="#f4f4f4" stroke-width="1.7"/></svg></div></div>
<div class="n " style="left:212px;top:1063px;width:135px;height:62px"><div class="h green" style="height:32.3px"></div><div class="in" style="left:-0.3px;top:0.0px"><span class="t tb" style="left:10.2px;top:9.4px;transform:translateY(-50%) scaleX(0.886);transform-origin:0 50%;">Roughness Contrast</span><span class="t ts" style="left:10.2px;top:23.1px;transform:translateY(-50%) scaleX(1.000);transform-origin:0 50%;">Param (1)</span><svg class="p" style="left:120.5px;top:11.4px" width="9" height="7" viewBox="0 0 9 7"><path d="M1 1.4 L4.5 5 L8 1.4" fill="none" stroke="#f4f4f4" stroke-width="1.7"/></svg><svg class="p" style="left:113.0px;top:38.4px" width="15" height="12" viewBox="0 0 15 12"><ellipse cx="6.5" cy="6" rx="4.6" ry="4.2" fill="#fff"/><path d="M10.8 4.2 L13.6 6 L10.8 7.8z" fill="#fff"/></svg><span class="vbx" style="left:80.2px;top:39.1px;width:22.5px;height:13.7px"><span class="t vb" style="left:50%;top:6.6px;transform:translate(-50%,-50%) scaleX(0.92)">1.0</span></span><span class="t lb" style="left:21.8px;top:46.0px;transform:translateY(-50%) scaleX(0.902);transform-origin:0 50%;">Default Value</span></div></div>
<div class="n " style="left:392px;top:967px;width:76px;height:70px"><div class="h mgreen" style="height:19.3px"></div><div class="in" style="left:-0.4px;top:0.0px"><span class="t tr" style="left:9.8px;top:10.9px;transform:translateY(-50%) scaleX(0.924);transform-origin:0 50%;">Power</span><svg class="p" style="left:61.5px;top:6.5px" width="9" height="7" viewBox="0 0 9 7"><path d="M1 1.4 L4.5 5 L8 1.4" fill="none" stroke="#f4f4f4" stroke-width="1.7"/></svg><svg class="p" style="left:6.0px;top:26.3px" width="15" height="12" viewBox="0 0 15 12"><ellipse cx="6.5" cy="6" rx="4.6" ry="4.2" fill="#fff"/><path d="M10.8 4.2 L13.6 6 L10.8 7.8z" fill="#fff"/></svg><span class="t lb" style="left:23.0px;top:32.8px;transform:translateY(-50%) scaleX(0.899);transform-origin:0 50%;">Base</span><svg class="p" style="left:6.0px;top:49.3px" width="15" height="12" viewBox="0 0 15 12"><ellipse cx="6.5" cy="6" rx="4.6" ry="4.0" fill="#3a3c3a"/><path d="M10.8 4.4 L13.2 6 L10.8 7.6z" fill="#303230"/></svg><span class="t lb" style="left:23.0px;top:55.8px;transform:translateY(-50%) scaleX(0.870);transform-origin:0 50%;">Exp</span><svg class="p" style="left:54.0px;top:26.3px" width="15" height="12" viewBox="0 0 15 12"><ellipse cx="6.5" cy="6" rx="4.6" ry="4.2" fill="#fff"/><path d="M10.8 4.2 L13.6 6 L10.8 7.8z" fill="#fff"/></svg></div></div>
<div class="n " style="left:500px;top:907px;width:57px;height:46px"><div class="h mgreen" style="height:19.0px"></div><div class="in" style="left:-0.3px;top:-0.3px"><span class="t tr" style="left:9.8px;top:10.9px;transform:translateY(-50%) scaleX(0.994);transform-origin:0 50%;">1-x</span><svg class="p" style="left:42.5px;top:6.5px" width="9" height="7" viewBox="0 0 9 7"><path d="M1 1.4 L4.5 5 L8 1.4" fill="none" stroke="#f4f4f4" stroke-width="1.7"/></svg><svg class="p" style="left:6.0px;top:26.3px" width="15" height="12" viewBox="0 0 15 12"><ellipse cx="6.5" cy="6" rx="4.6" ry="4.2" fill="#fff"/><path d="M10.8 4.2 L13.6 6 L10.8 7.8z" fill="#fff"/></svg><svg class="p" style="left:35.0px;top:26.3px" width="15" height="12" viewBox="0 0 15 12"><ellipse cx="6.5" cy="6" rx="4.6" ry="4.2" fill="#fff"/><path d="M10.8 4.2 L13.6 6 L10.8 7.8z" fill="#fff"/></svg></div></div>
<div class="n " style="left:584px;top:811px;width:135px;height:62px"><div class="h green" style="height:32.3px"></div><div class="in" style="left:-0.4px;top:0.0px"><span class="t tb" style="left:10.2px;top:9.4px;transform:translateY(-50%) scaleX(0.902);transform-origin:0 50%;">Roughness Min</span><span class="t ts" style="left:10.2px;top:23.1px;transform:translateY(-50%) scaleX(1.000);transform-origin:0 50%;">Param (0)</span><svg class="p" style="left:120.5px;top:11.4px" width="9" height="7" viewBox="0 0 9 7"><path d="M1 1.4 L4.5 5 L8 1.4" fill="none" stroke="#f4f4f4" stroke-width="1.7"/></svg><svg class="p" style="left:113.0px;top:38.4px" width="15" height="12" viewBox="0 0 15 12"><ellipse cx="6.5" cy="6" rx="4.6" ry="4.2" fill="#fff"/><path d="M10.8 4.2 L13.6 6 L10.8 7.8z" fill="#fff"/></svg><span class="vbx" style="left:80.2px;top:39.1px;width:22.5px;height:13.7px"><span class="t vb" style="left:50%;top:6.6px;transform:translate(-50%,-50%) scaleX(0.92)">0.0</span></span><span class="t lb" style="left:21.8px;top:46.0px;transform:translateY(-50%) scaleX(0.902);transform-origin:0 50%;">Default Value</span></div></div>
<div class="n " style="left:584px;top:883px;width:135px;height:62px"><div class="h green" style="height:32.3px"></div><div class="in" style="left:-0.4px;top:0.0px"><span class="t tb" style="left:10.2px;top:9.4px;transform:translateY(-50%) scaleX(0.894);transform-origin:0 50%;">Roughness Max</span><span class="t ts" style="left:10.2px;top:23.1px;transform:translateY(-50%) scaleX(1.000);transform-origin:0 50%;">Param (1)</span><svg class="p" style="left:120.5px;top:11.4px" width="9" height="7" viewBox="0 0 9 7"><path d="M1 1.4 L4.5 5 L8 1.4" fill="none" stroke="#f4f4f4" stroke-width="1.7"/></svg><svg class="p" style="left:113.0px;top:38.4px" width="15" height="12" viewBox="0 0 15 12"><ellipse cx="6.5" cy="6" rx="4.6" ry="4.2" fill="#fff"/><path d="M10.8 4.2 L13.6 6 L10.8 7.8z" fill="#fff"/></svg><span class="vbx" style="left:80.2px;top:39.1px;width:22.5px;height:13.7px"><span class="t vb" style="left:50%;top:6.6px;transform:translate(-50%,-50%) scaleX(0.92)">1.0</span></span><span class="t lb" style="left:21.8px;top:46.0px;transform:translateY(-50%) scaleX(0.902);transform-origin:0 50%;">Default Value</span></div></div>
<div class="n " style="left:572px;top:967px;width:152px;height:106px"><div class="h teal2" style="height:32.3px"></div><div class="in" style="left:-0.4px;top:0.0px"><span class="t tb" style="left:10.2px;top:9.4px;transform:translateY(-50%) scaleX(0.893);transform-origin:0 50%;">Invert Roughness Texture</span><span class="t ts" style="left:10.2px;top:23.1px;transform:translateY(-50%) scaleX(0.993);transform-origin:0 50%;">Switch Param (False)</span><svg class="p" style="left:6.0px;top:38.3px" width="15" height="12" viewBox="0 0 15 12"><ellipse cx="6.5" cy="6" rx="4.6" ry="4.2" fill="#fff"/><path d="M10.8 4.2 L13.6 6 L10.8 7.8z" fill="#fff"/></svg><span class="t lb" style="left:23.0px;top:44.8px;transform:translateY(-50%) scaleX(0.842);transform-origin:0 50%;">True</span><svg class="p" style="left:6.0px;top:61.1px" width="15" height="12" viewBox="0 0 15 12"><ellipse cx="6.5" cy="6" rx="4.6" ry="4.2" fill="#fff"/><path d="M10.8 4.2 L13.6 6 L10.8 7.8z" fill="#fff"/></svg><span class="t lb" style="left:23.0px;top:67.6px;transform:translateY(-50%) scaleX(0.838);transform-origin:0 50%;">False</span><span class="t lb" style="left:23.0px;top:91.4px;transform:translateY(-50%) scaleX(0.902);transform-origin:0 50%;">Default Value</span><span class="cbx" style="left:81.0px;top:84.7px"></span><svg class="p" style="left:130.2px;top:38.3px" width="15" height="12" viewBox="0 0 15 12"><ellipse cx="6.5" cy="6" rx="4.6" ry="4.2" fill="#fff"/><path d="M10.8 4.2 L13.6 6 L10.8 7.8z" fill="#fff"/></svg></div></div>
<div class="n " style="left:752px;top:871px;width:81px;height:92px"><div class="h mgreen" style="height:19.1px"></div><div class="in" style="left:-0.4px;top:-0.2px"><span class="t tr" style="left:9.8px;top:10.9px;transform:translateY(-50%) scaleX(0.985);transform-origin:0 50%;">Lerp</span><svg class="p" style="left:66.7px;top:6.5px" width="9" height="7" viewBox="0 0 9 7"><path d="M1 1.4 L4.5 5 L8 1.4" fill="none" stroke="#f4f4f4" stroke-width="1.7"/></svg><svg class="p" style="left:6.0px;top:26.3px" width="15" height="12" viewBox="0 0 15 12"><ellipse cx="6.5" cy="6" rx="4.6" ry="4.0" fill="#3a3c3a"/><path d="M10.8 4.4 L13.2 6 L10.8 7.6z" fill="#303230"/></svg><span class="t lb" style="left:23.0px;top:32.8px;transform:translateY(-50%) scaleX(0.900);transform-origin:0 50%;">A</span><svg class="p" style="left:6.0px;top:49.3px" width="15" height="12" viewBox="0 0 15 12"><ellipse cx="6.5" cy="6" rx="4.6" ry="4.0" fill="#3a3c3a"/><path d="M10.8 4.4 L13.2 6 L10.8 7.6z" fill="#303230"/></svg><span class="t lb" style="left:23.0px;top:55.8px;transform:translateY(-50%) scaleX(0.870);transform-origin:0 50%;">B</span><svg class="p" style="left:6.0px;top:72.3px" width="15" height="12" viewBox="0 0 15 12"><ellipse cx="6.5" cy="6" rx="4.6" ry="4.0" fill="#3a3c3a"/><path d="M10.8 4.4 L13.2 6 L10.8 7.6z" fill="#303230"/></svg><span class="t lb" style="left:23.0px;top:78.8px;transform:translateY(-50%) scaleX(0.895);transform-origin:0 50%;">Alpha</span><svg class="p" style="left:59.2px;top:26.3px" width="15" height="12" viewBox="0 0 15 12"><ellipse cx="6.5" cy="6" rx="4.6" ry="4.2" fill="#fff"/><path d="M10.8 4.2 L13.6 6 L10.8 7.8z" fill="#fff"/></svg></div></div>
<div class="n " style="left:752px;top:1003px;width:135px;height:62px"><div class="h green" style="height:32.3px"></div><div class="in" style="left:-0.4px;top:0.0px"><span class="t tb" style="left:10.2px;top:9.4px;transform:translateY(-50%) scaleX(0.892);transform-origin:0 50%;">Roughness</span><span class="t ts" style="left:10.2px;top:23.1px;transform:translateY(-50%) scaleX(0.989);transform-origin:0 50%;">Param (0.5)</span><svg class="p" style="left:120.7px;top:11.4px" width="9" height="7" viewBox="0 0 9 7"><path d="M1 1.4 L4.5 5 L8 1.4" fill="none" stroke="#f4f4f4" stroke-width="1.7"/></svg><svg class="p" style="left:113.2px;top:38.4px" width="15" height="12" viewBox="0 0 15 12"><ellipse cx="6.5" cy="6" rx="4.6" ry="4.2" fill="#fff"/><path d="M10.8 4.2 L13.6 6 L10.8 7.8z" fill="#fff"/></svg><span class="vbx" style="left:80.2px;top:39.1px;width:22.5px;height:13.7px"><span class="t vb" style="left:50%;top:6.6px;transform:translate(-50%,-50%) scaleX(0.92)">0.5</span></span><span class="t lb" style="left:21.8px;top:46.0px;transform:translateY(-50%) scaleX(0.902);transform-origin:0 50%;">Default Value</span></div></div>
<div class="n " style="left:908px;top:895px;width:143px;height:106px"><div class="h teal2" style="height:32.1px"></div><div class="in" style="left:-0.4px;top:-0.2px"><span class="t tb" style="left:10.2px;top:9.4px;transform:translateY(-50%) scaleX(0.888);transform-origin:0 50%;">Use Roughness Texture</span><span class="t ts" style="left:10.2px;top:23.1px;transform:translateY(-50%) scaleX(0.993);transform-origin:0 50%;">Switch Param (False)</span><svg class="p" style="left:6.0px;top:38.3px" width="15" height="12" viewBox="0 0 15 12"><ellipse cx="6.5" cy="6" rx="4.6" ry="4.2" fill="#fff"/><path d="M10.8 4.2 L13.6 6 L10.8 7.8z" fill="#fff"/></svg><span class="t lb" style="left:23.0px;top:44.8px;transform:translateY(-50%) scaleX(0.842);transform-origin:0 50%;">True</span><svg class="p" style="left:6.0px;top:61.1px" width="15" height="12" viewBox="0 0 15 12"><ellipse cx="6.5" cy="6" rx="4.6" ry="4.2" fill="#fff"/><path d="M10.8 4.2 L13.6 6 L10.8 7.8z" fill="#fff"/></svg><span class="t lb" style="left:23.0px;top:67.6px;transform:translateY(-50%) scaleX(0.838);transform-origin:0 50%;">False</span><span class="t lb" style="left:23.0px;top:91.4px;transform:translateY(-50%) scaleX(0.902);transform-origin:0 50%;">Default Value</span><span class="cbx" style="left:81.0px;top:84.7px"></span><svg class="p" style="left:121.0px;top:38.3px" width="15" height="12" viewBox="0 0 15 12"><ellipse cx="6.5" cy="6" rx="4.6" ry="4.2" fill="#fff"/><path d="M10.8 4.2 L13.6 6 L10.8 7.8z" fill="#fff"/></svg></div></div>
<div class="n " style="left:1136px;top:799px;width:104px;height:50px"><div class="h green2" style="height:19.5px"></div><div class="in" style="left:0.0px;top:0.2px"><span class="t tr" style="left:9.8px;top:10.9px;transform:translateY(-50%) scaleX(0.771);transform-origin:0 50%;">1</span><svg class="p" style="left:89.3px;top:6.5px" width="9" height="7" viewBox="0 0 9 7"><path d="M1 1.4 L4.5 5 L8 1.4" fill="none" stroke="#f4f4f4" stroke-width="1.7"/></svg><svg class="p" style="left:81.8px;top:26.1px" width="15" height="12" viewBox="0 0 15 12"><ellipse cx="6.5" cy="6" rx="4.6" ry="4.2" fill="#fff"/><path d="M10.8 4.2 L13.6 6 L10.8 7.8z" fill="#fff"/></svg><span class="vbx" style="left:49.7px;top:26.9px;width:22.3px;height:13.7px"><span class="t vb" style="left:50%;top:6.6px;transform:translate(-50%,-50%) scaleX(0.92)">1.0</span></span><span class="t lb" style="left:22.4px;top:33.6px;transform:translateY(-50%) scaleX(0.898);transform-origin:0 50%;">Value</span></div></div>
<div class="n " style="left:382px;top:1221px;width:156px;height:186px"><div class="h blue" style="height:31.1px"></div><div class="in" style="left:-0.7px;top:-0.2px"><span class="t tb" style="left:10.2px;top:9.4px;transform:translateY(-50%) scaleX(0.924);transform-origin:0 50%;">Normal Map</span><span class="t ts" style="left:10.2px;top:23.1px;transform:translateY(-50%) scaleX(0.868);transform-origin:0 50%;">Param2D</span><svg class="p" style="left:142.0px;top:12.2px" width="9" height="7" viewBox="0 0 9 7"><path d="M1 5.2 L4.5 1.6 L8 5.2" fill="none" stroke="#f4f4f4" stroke-width="1.7"/></svg><svg class="p" style="left:134.5px;top:37.5px" width="15" height="12" viewBox="0 0 15 12"><ellipse cx="6.5" cy="6" rx="4.6" ry="4.2" fill="#fff"/><path d="M10.8 4.2 L13.6 6 L10.8 7.8z" fill="#fff"/></svg><svg class="p" style="left:134.5px;top:60.5px" width="15" height="12" viewBox="0 0 15 12"><ellipse cx="6.5" cy="6" rx="3.8" ry="3.4" fill="#050505" stroke="#e00012" stroke-width="1.7"/><path d="M10.8 4.2 L13.6 6 L10.8 7.8z" fill="#e00012"/></svg><svg class="p" style="left:134.5px;top:83.5px" width="15" height="12" viewBox="0 0 15 12"><ellipse cx="6.5" cy="6" rx="3.8" ry="3.4" fill="#050505" stroke="#00dd10" stroke-width="1.7"/><path d="M10.8 4.2 L13.6 6 L10.8 7.8z" fill="#00dd10"/></svg><svg class="p" style="left:134.5px;top:106.5px" width="15" height="12" viewBox="0 0 15 12"><ellipse cx="6.5" cy="6" rx="3.8" ry="3.4" fill="#050505" stroke="#0008d8" stroke-width="1.7"/><path d="M10.8 4.2 L13.6 6 L10.8 7.8z" fill="#0008d8"/></svg><svg class="p" style="left:134.5px;top:129.5px" width="15" height="12" viewBox="0 0 15 12"><ellipse cx="6.5" cy="6" rx="3.8" ry="3.4" fill="#050505" stroke="#b8b8b8" stroke-width="1.7"/><path d="M10.8 4.2 L13.6 6 L10.8 7.8z" fill="#b8b8b8"/></svg><svg class="p" style="left:134.5px;top:152.5px" width="15" height="12" viewBox="0 0 15 12"><ellipse cx="6.5" cy="6" rx="3.8" ry="3.4" fill="#050505" stroke="#f0f0f0" stroke-width="1.7"/><path d="M10.8 4.2 L13.6 6 L10.8 7.8z" fill="#f0f0f0"/></svg><span class="t lb" style="left:132.8px;top:43.8px;transform:translate(-100%,-50%) scaleX(0.808);transform-origin:100% 50%;">RGB</span><span class="t lb" style="left:132.8px;top:66.8px;transform:translate(-100%,-50%) scaleX(0.803);transform-origin:100% 50%;">R</span><span class="t lb" style="left:132.8px;top:89.8px;transform:translate(-100%,-50%) scaleX(0.810);transform-origin:100% 50%;">G</span><span class="t lb" style="left:132.8px;top:112.8px;transform:translate(-100%,-50%) scaleX(0.870);transform-origin:100% 50%;">B</span><span class="t lb" style="left:132.8px;top:135.8px;transform:translate(-100%,-50%) scaleX(0.900);transform-origin:100% 50%;">A</span><span class="t lb" style="left:132.8px;top:158.8px;transform:translate(-100%,-50%) scaleX(0.829);transform-origin:100% 50%;">RGBA</span><svg class="p" style="left:5.5px;top:39.5px" width="15" height="12" viewBox="0 0 15 12"><ellipse cx="6.5" cy="6" rx="3.8" ry="3.5" fill="#0c0d0c" stroke="#2c2e2c" stroke-width="1.4"/><path d="M10.8 4.6 L12.8 6 L10.8 7.4z" fill="#2c2e2c"/></svg><span class="t lb" style="left:22.5px;top:46.2px;transform:translateY(-50%) scaleX(0.873);transform-origin:0 50%;">UVs</span><span class="vbx" style="left:43.5px;top:39.3px;width:13.5px;height:13.7px"><span class="t vb" style="left:50%;top:6.6px;transform:translate(-50%,-50%) scaleX(0.92)">0</span></span><svg class="p" style="left:5.5px;top:64.7px" width="15" height="12" viewBox="0 0 15 12"><ellipse cx="6.5" cy="6" rx="3.8" ry="3.5" fill="#0c0d0c" stroke="#2c2e2c" stroke-width="1.4"/><path d="M10.8 4.6 L12.8 6 L10.8 7.4z" fill="#2c2e2c"/></svg><span class="t lb" style="left:22.5px;top:71.5px;transform:translateY(-50%) scaleX(0.913);transform-origin:0 50%;">Apply View MipBias</span><span class="pv" style="left:4px;top:85px"><svg width="72" height="72" viewBox="0 0 72 72"><rect width="72" height="72" fill="#2418f2"/><g fill="none" stroke-width="1.7" stroke-linecap="round"><path d="M-5.3 -7.9L-9.4 -15.0M-5.3 6.1L-9.4 -0.9M-5.3 20.1L-9.4 13.1M-5.3 34.1L-9.4 27.1M-5.3 48.2L-9.4 41.2M-5.3 62.2L-9.4 55.2M-5.3 76.2L-9.4 69.2M19.0 -7.9L14.9 -15.0M6.8 -0.9L2.8 -7.9M19.0 6.1L14.9 -0.9M6.8 13.1L2.8 6.1M19.0 20.1L14.9 13.1M6.8 27.1L2.8 20.1M19.0 34.1L14.9 27.1M6.8 41.2L2.8 34.1M19.0 48.2L14.9 41.2M6.8 55.2L2.8 48.2M19.0 62.2L14.9 55.2M6.8 69.2L2.8 62.2M19.0 76.2L14.9 69.2M43.2 -7.9L39.2 -15.0M31.1 -0.9L27.0 -7.9M43.2 6.1L39.2 -0.9M31.1 13.1L27.0 6.1M43.2 20.1L39.2 13.1M31.1 27.1L27.0 20.1M43.2 34.1L39.2 27.1M31.1 41.2L27.0 34.1M43.2 48.2L39.2 41.2M31.1 55.2L27.0 48.2M43.2 62.2L39.2 55.2M31.1 69.2L27.0 62.2M43.2 76.2L39.2 69.2M67.5 -7.9L63.5 -15.0M55.4 -0.9L51.3 -7.9M67.5 6.1L63.5 -0.9M55.4 13.1L51.3 6.1M67.5 20.1L63.5 13.1M55.4 27.1L51.3 20.1M67.5 34.1L63.5 27.1M55.4 41.2L51.3 34.1M67.5 48.2L63.5 41.2M55.4 55.2L51.3 48.2M67.5 62.2L63.5 55.2M55.4 69.2L51.3 62.2M67.5 76.2L63.5 69.2M79.7 -0.9L75.6 -7.9M79.7 13.1L75.6 6.1M79.7 27.1L75.6 20.1M79.7 41.2L75.6 34.1M79.7 55.2L75.6 48.2M79.7 69.2L75.6 62.2" stroke="#c418f4"/><path d="M-5.3 -7.9L-9.4 -0.9M6.8 -0.9L2.8 6.1M-5.3 6.1L-9.4 13.1M6.8 13.1L2.8 20.1M-5.3 20.1L-9.4 27.1M6.8 27.1L2.8 34.1M-5.3 34.1L-9.4 41.2M6.8 41.2L2.8 48.2M-5.3 48.2L-9.4 55.2M6.8 55.2L2.8 62.2M-5.3 62.2L-9.4 69.2M6.8 69.2L2.8 76.2M-5.3 76.2L-9.4 83.2M18.9 -7.9L14.9 -0.9M31.1 -0.9L27.1 6.1M18.9 6.1L14.9 13.1M31.1 13.1L27.1 20.1M18.9 20.1L14.9 27.1M31.1 27.1L27.1 34.1M18.9 34.1L14.9 41.2M31.1 41.2L27.1 48.2M18.9 48.2L14.9 55.2M31.1 55.2L27.1 62.2M18.9 62.2L14.9 69.2M31.1 69.2L27.1 76.2M18.9 76.2L14.9 83.2M43.2 -7.9L39.2 -0.9M55.4 -0.9L51.3 6.1M43.2 6.1L39.2 13.1M55.4 13.1L51.3 20.1M43.2 20.1L39.2 27.1M55.4 27.1L51.3 34.1M43.2 34.1L39.2 41.2M55.4 41.2L51.3 48.2M43.2 48.2L39.2 55.2M55.4 55.2L51.3 62.2M43.2 62.2L39.2 69.2M55.4 69.2L51.3 76.2M43.2 76.2L39.2 83.2M67.5 -7.9L63.5 -0.9M79.7 -0.9L75.6 6.1M67.5 6.1L63.5 13.1M79.7 13.1L75.6 20.1M67.5 20.1L63.5 27.1M79.7 27.1L75.6 34.1M67.5 34.1L63.5 41.2M79.7 41.2L75.6 48.2M67.5 48.2L63.5 55.2M79.7 55.2L75.6 62.2M67.5 62.2L63.5 69.2M79.7 69.2L75.6 76.2M67.5 76.2L63.5 83.2" stroke="#b078ff"/><path d="M2.8 -7.9L-5.3 -7.9M-9.4 -0.9L-17.5 -0.9M2.8 6.1L-5.3 6.1M-9.4 13.1L-17.5 13.1M2.8 20.1L-5.3 20.1M-9.4 27.1L-17.5 27.1M2.8 34.1L-5.3 34.1M-9.4 41.2L-17.5 41.2M2.8 48.2L-5.3 48.2M-9.4 55.2L-17.5 55.2M2.8 62.2L-5.3 62.2M-9.4 69.2L-17.5 69.2M2.8 76.2L-5.3 76.2M27.1 -7.9L19.0 -7.9M14.9 -0.9L6.8 -0.9M27.1 6.1L19.0 6.1M14.9 13.1L6.8 13.1M27.1 20.1L19.0 20.1M14.9 27.1L6.8 27.1M27.1 34.1L19.0 34.1M14.9 41.2L6.8 41.2M27.1 48.2L19.0 48.2M14.9 55.2L6.8 55.2M27.1 62.2L19.0 62.2M14.9 69.2L6.8 69.2M27.1 76.2L19.0 76.2M51.3 -7.9L43.2 -7.9M39.2 -0.9L31.1 -0.9M51.3 6.1L43.2 6.1M39.2 13.1L31.1 13.1M51.3 20.1L43.2 20.1M39.2 27.1L31.1 27.1M51.3 34.1L43.2 34.1M39.2 41.2L31.1 41.2M51.3 48.2L43.2 48.2M39.2 55.2L31.1 55.2M51.3 62.2L43.2 62.2M39.2 69.2L31.1 69.2M51.3 76.2L43.2 76.2M75.6 -7.9L67.5 -7.9M63.5 -0.9L55.4 -0.9M75.6 6.1L67.5 6.1M63.5 13.1L55.4 13.1M75.6 20.1L67.5 20.1M63.5 27.1L55.4 27.1M75.6 34.1L67.5 34.1M63.5 41.2L55.4 41.2M75.6 48.2L67.5 48.2M63.5 55.2L55.4 55.2M75.6 62.2L67.5 62.2M63.5 69.2L55.4 69.2M75.6 76.2L67.5 76.2" stroke="#0aa0ff"/></g></svg></span><svg class="p" style="left:73.8px;top:173.7px" width="9" height="7" viewBox="0 0 9 7"><path d="M1 1.4 L4.5 5 L8 1.4" fill="none" stroke="#f4f4f4" stroke-width="1.7"/></svg></div></div>
<div class="n " style="left:632px;top:1221px;width:89px;height:60px"><div class="h mgreen" style="height:19.1px"></div><div class="in" style="left:0.9px;top:-0.2px"><span class="t tr" style="left:9.8px;top:10.9px;transform:translateY(-50%) scaleX(0.866);transform-origin:0 50%;">Mask ( R G )</span><svg class="p" style="left:73.2px;top:6.5px" width="9" height="7" viewBox="0 0 9 7"><path d="M1 1.4 L4.5 5 L8 1.4" fill="none" stroke="#f4f4f4" stroke-width="1.7"/></svg><svg class="p" style="left:6.0px;top:26.3px" width="15" height="12" viewBox="0 0 15 12"><ellipse cx="6.5" cy="6" rx="4.6" ry="4.2" fill="#fff"/><path d="M10.8 4.2 L13.6 6 L10.8 7.8z" fill="#fff"/></svg><svg class="p" style="left:65.7px;top:26.3px" width="15" height="12" viewBox="0 0 15 12"><ellipse cx="6.5" cy="6" rx="4.6" ry="4.2" fill="#fff"/><path d="M10.8 4.2 L13.6 6 L10.8 7.8z" fill="#fff"/></svg><svg class="p" style="left:39.0px;top:46.7px" width="9" height="7" viewBox="0 0 9 7"><path d="M1 1.4 L4.5 5 L8 1.4" fill="none" stroke="#f4f4f4" stroke-width="1.7"/></svg></div></div>
<div class="n " style="left:598px;top:1317px;width:135px;height:61px"><div class="h green" style="height:32.0px"></div><div class="in" style="left:-0.4px;top:-0.3px"><span class="t tb" style="left:10.2px;top:9.4px;transform:translateY(-50%) scaleX(0.913);transform-origin:0 50%;">Normal Map Intensity</span><span class="t ts" style="left:10.2px;top:23.1px;transform:translateY(-50%) scaleX(1.000);transform-origin:0 50%;">Param (0)</span><svg class="p" style="left:120.5px;top:11.4px" width="9" height="7" viewBox="0 0 9 7"><path d="M1 1.4 L4.5 5 L8 1.4" fill="none" stroke="#f4f4f4" stroke-width="1.7"/></svg><svg class="p" style="left:113.0px;top:38.4px" width="15" height="12" viewBox="0 0 15 12"><ellipse cx="6.5" cy="6" rx="4.6" ry="4.2" fill="#fff"/><path d="M10.8 4.2 L13.6 6 L10.8 7.8z" fill="#fff"/></svg><span class="vbx" style="left:80.2px;top:39.1px;width:21.5px;height:13.7px"><span class="t vb" style="left:50%;top:6.6px;transform:translate(-50%,-50%) scaleX(0.92)">0.0</span></span><span class="t lb" style="left:21.8px;top:46.0px;transform:translateY(-50%) scaleX(0.902);transform-origin:0 50%;">Default Value</span></div></div>
<div class="n " style="left:788px;top:1233px;width:76px;height:69px"><div class="h mgreen" style="height:18.8px"></div><div class="in" style="left:0.9px;top:-0.5px"><span class="t tr" style="left:9.8px;top:10.9px;transform:translateY(-50%) scaleX(1.068);transform-origin:0 50%;">Multiply</span><svg class="p" style="left:60.3px;top:6.5px" width="9" height="7" viewBox="0 0 9 7"><path d="M1 1.4 L4.5 5 L8 1.4" fill="none" stroke="#f4f4f4" stroke-width="1.7"/></svg><svg class="p" style="left:6.0px;top:26.3px" width="15" height="12" viewBox="0 0 15 12"><ellipse cx="6.5" cy="6" rx="4.6" ry="4.0" fill="#3a3c3a"/><path d="M10.8 4.4 L13.2 6 L10.8 7.6z" fill="#303230"/></svg><span class="t lb" style="left:23.0px;top:32.8px;transform:translateY(-50%) scaleX(0.900);transform-origin:0 50%;">A</span><svg class="p" style="left:6.0px;top:49.3px" width="15" height="12" viewBox="0 0 15 12"><ellipse cx="6.5" cy="6" rx="4.6" ry="4.0" fill="#3a3c3a"/><path d="M10.8 4.4 L13.2 6 L10.8 7.6z" fill="#303230"/></svg><span class="t lb" style="left:23.0px;top:55.8px;transform:translateY(-50%) scaleX(0.870);transform-origin:0 50%;">B</span><svg class="p" style="left:52.8px;top:26.3px" width="15" height="12" viewBox="0 0 15 12"><ellipse cx="6.5" cy="6" rx="4.6" ry="4.2" fill="#fff"/><path d="M10.8 4.2 L13.6 6 L10.8 7.8z" fill="#fff"/></svg></div></div>
<div class="n " style="left:956px;top:1269px;width:74px;height:69px"><div class="h mgreen" style="height:18.8px"></div><div class="in" style="left:0.8px;top:-0.5px"><span class="t tr" style="left:9.8px;top:10.9px;transform:translateY(-50%) scaleX(0.953);transform-origin:0 50%;">Append</span><svg class="p" style="left:57.7px;top:6.5px" width="9" height="7" viewBox="0 0 9 7"><path d="M1 1.4 L4.5 5 L8 1.4" fill="none" stroke="#f4f4f4" stroke-width="1.7"/></svg><svg class="p" style="left:6.0px;top:26.3px" width="15" height="12" viewBox="0 0 15 12"><ellipse cx="6.5" cy="6" rx="4.6" ry="4.2" fill="#fff"/><path d="M10.8 4.2 L13.6 6 L10.8 7.8z" fill="#fff"/></svg><span class="t lb" style="left:23.0px;top:32.8px;transform:translateY(-50%) scaleX(0.900);transform-origin:0 50%;">A</span><svg class="p" style="left:6.0px;top:49.3px" width="15" height="12" viewBox="0 0 15 12"><ellipse cx="6.5" cy="6" rx="4.6" ry="4.2" fill="#fff"/><path d="M10.8 4.2 L13.6 6 L10.8 7.8z" fill="#fff"/></svg><span class="t lb" style="left:23.0px;top:55.8px;transform:translateY(-50%) scaleX(0.870);transform-origin:0 50%;">B</span><svg class="p" style="left:50.2px;top:26.3px" width="15" height="12" viewBox="0 0 15 12"><ellipse cx="6.5" cy="6" rx="4.6" ry="4.2" fill="#fff"/><path d="M10.8 4.2 L13.6 6 L10.8 7.8z" fill="#fff"/></svg></div></div>
<div class="n " style="left:802px;top:1389px;width:104px;height:50px"><div class="h green2" style="height:19.1px"></div><div class="in" style="left:-0.3px;top:-0.2px"><span class="t tr" style="left:9.8px;top:10.9px;transform:translateY(-50%) scaleX(0.771);transform-origin:0 50%;">1</span><svg class="p" style="left:88.9px;top:6.5px" width="9" height="7" viewBox="0 0 9 7"><path d="M1 1.4 L4.5 5 L8 1.4" fill="none" stroke="#f4f4f4" stroke-width="1.7"/></svg><svg class="p" style="left:81.4px;top:26.1px" width="15" height="12" viewBox="0 0 15 12"><ellipse cx="6.5" cy="6" rx="4.6" ry="4.2" fill="#fff"/><path d="M10.8 4.2 L13.6 6 L10.8 7.8z" fill="#fff"/></svg><span class="vbx" style="left:49.7px;top:26.9px;width:22.3px;height:13.7px"><span class="t vb" style="left:50%;top:6.6px;transform:translate(-50%,-50%) scaleX(0.92)">1.0</span></span><span class="t lb" style="left:22.4px;top:33.6px;transform:translateY(-50%) scaleX(0.898);transform-origin:0 50%;">Value</span></div></div>
<div class="n " style="left:697px;top:1517px;width:104px;height:49px"><div class="h green2" style="height:18.4px"></div><div class="in" style="left:-1.0px;top:-0.9px"><span class="t tr" style="left:9.8px;top:10.1px;transform:translateY(-50%) scaleX(0.771);transform-origin:0 50%;">1</span><svg class="p" style="left:89.7px;top:5.7px" width="9" height="7" viewBox="0 0 9 7"><path d="M1 1.4 L4.5 5 L8 1.4" fill="none" stroke="#f4f4f4" stroke-width="1.7"/></svg><svg class="p" style="left:82.2px;top:26.1px" width="15" height="12" viewBox="0 0 15 12"><ellipse cx="6.5" cy="6" rx="4.6" ry="4.2" fill="#fff"/><path d="M10.8 4.2 L13.6 6 L10.8 7.8z" fill="#fff"/></svg><span class="vbx" style="left:49.7px;top:26.9px;width:22.3px;height:13.7px"><span class="t vb" style="left:50%;top:6.6px;transform:translate(-50%,-50%) scaleX(0.92)">1.0</span></span><span class="t lb" style="left:22.4px;top:33.6px;transform:translateY(-50%) scaleX(0.898);transform-origin:0 50%;">Value</span></div></div>
<div class="n " style="left:685px;top:1601px;width:141px;height:61px"><div class="h green" style="height:31.3px"></div><div class="in" style="left:-0.6px;top:-1.0px"><span class="t tb" style="left:9.6px;top:8.6px;transform:translateY(-50%) scaleX(0.886);transform-origin:0 50%;">Refraction</span><span class="t ts" style="left:9.6px;top:22.3px;transform:translateY(-50%) scaleX(0.990);transform-origin:0 50%;">Param (1.52)</span><svg class="p" style="left:126.5px;top:10.6px" width="9" height="7" viewBox="0 0 9 7"><path d="M1 1.4 L4.5 5 L8 1.4" fill="none" stroke="#f4f4f4" stroke-width="1.7"/></svg><svg class="p" style="left:119.0px;top:38.4px" width="15" height="12" viewBox="0 0 15 12"><ellipse cx="6.5" cy="6" rx="4.6" ry="4.2" fill="#fff"/><path d="M10.8 4.2 L13.6 6 L10.8 7.8z" fill="#fff"/></svg><span class="vbx" style="left:80.2px;top:39.1px;width:28.0px;height:13.7px"><span class="t vb" style="left:50%;top:6.6px;transform:translate(-50%,-50%) scaleX(0.92)">1.52</span></span><span class="t lb" style="left:21.8px;top:46.0px;transform:translateY(-50%) scaleX(0.902);transform-origin:0 50%;">Default Value</span></div></div>
<div class="n " style="left:948px;top:1553px;width:81px;height:92px"><div class="h mgreen" style="height:18.4px"></div><div class="in" style="left:-0.3px;top:-0.9px"><span class="t tr" style="left:9.8px;top:10.1px;transform:translateY(-50%) scaleX(0.985);transform-origin:0 50%;">Lerp</span><svg class="p" style="left:66.6px;top:5.7px" width="9" height="7" viewBox="0 0 9 7"><path d="M1 1.4 L4.5 5 L8 1.4" fill="none" stroke="#f4f4f4" stroke-width="1.7"/></svg><svg class="p" style="left:6.0px;top:26.3px" width="15" height="12" viewBox="0 0 15 12"><ellipse cx="6.5" cy="6" rx="4.6" ry="4.0" fill="#3a3c3a"/><path d="M10.8 4.4 L13.2 6 L10.8 7.6z" fill="#303230"/></svg><span class="t lb" style="left:23.0px;top:32.8px;transform:translateY(-50%) scaleX(0.900);transform-origin:0 50%;">A</span><svg class="p" style="left:6.0px;top:49.3px" width="15" height="12" viewBox="0 0 15 12"><ellipse cx="6.5" cy="6" rx="4.6" ry="4.0" fill="#3a3c3a"/><path d="M10.8 4.4 L13.2 6 L10.8 7.6z" fill="#303230"/></svg><span class="t lb" style="left:23.0px;top:55.8px;transform:translateY(-50%) scaleX(0.870);transform-origin:0 50%;">B</span><svg class="p" style="left:6.0px;top:72.3px" width="15" height="12" viewBox="0 0 15 12"><ellipse cx="6.5" cy="6" rx="4.6" ry="4.0" fill="#3a3c3a"/><path d="M10.8 4.4 L13.2 6 L10.8 7.6z" fill="#303230"/></svg><span class="t lb" style="left:23.0px;top:78.8px;transform:translateY(-50%) scaleX(0.895);transform-origin:0 50%;">Alpha</span><svg class="p" style="left:59.1px;top:26.3px" width="15" height="12" viewBox="0 0 15 12"><ellipse cx="6.5" cy="6" rx="4.6" ry="4.2" fill="#fff"/><path d="M10.8 4.2 L13.6 6 L10.8 7.8z" fill="#fff"/></svg></div></div>
<div class="n " style="left:673px;top:1697px;width:145px;height:110px"><div class="h mgreen" style="height:18.5px"></div><div class="in" style="left:-0.5px;top:-0.8px"><span class="t tr" style="left:9.8px;top:10.1px;transform:translateY(-50%) scaleX(0.942);transform-origin:0 50%;">Fresnel</span><svg class="p" style="left:130.5px;top:5.7px" width="9" height="7" viewBox="0 0 9 7"><path d="M1 1.4 L4.5 5 L8 1.4" fill="none" stroke="#f4f4f4" stroke-width="1.7"/></svg><svg class="p" style="left:5.0px;top:27.2px" width="15" height="12" viewBox="0 0 15 12"><ellipse cx="6.5" cy="6" rx="3.8" ry="3.5" fill="#0c0d0c" stroke="#2c2e2c" stroke-width="1.4"/><path d="M10.8 4.6 L12.8 6 L10.8 7.4z" fill="#2c2e2c"/></svg><span class="t lb" style="left:22.0px;top:33.8px;transform:translateY(-50%) scaleX(0.909);transform-origin:0 50%;">ExponentIn</span><span class="vbx" style="left:73.0px;top:27.0px;width:21.5px;height:13.5px"><span class="t vb" style="left:50%;top:6.6px;transform:translate(-50%,-50%) scaleX(0.92)">5.0</span></span><svg class="p" style="left:5.0px;top:60.7px" width="15" height="12" viewBox="0 0 15 12"><ellipse cx="6.5" cy="6" rx="3.8" ry="3.5" fill="#0c0d0c" stroke="#2c2e2c" stroke-width="1.4"/><path d="M10.8 4.6 L12.8 6 L10.8 7.4z" fill="#2c2e2c"/></svg><span class="t lb" style="left:22.0px;top:59.3px;transform:translateY(-50%) scaleX(0.925);transform-origin:0 50%;">BaseReflectFractionIn</span><span class="vbx" style="left:26.7px;top:65.8px;width:27.5px;height:13.5px"><span class="t vb" style="left:50%;top:6.6px;transform:translate(-50%,-50%) scaleX(0.92)">0.04</span></span><svg class="p" style="left:5.0px;top:91.0px" width="15" height="12" viewBox="0 0 15 12"><ellipse cx="6.5" cy="6" rx="3.8" ry="3.5" fill="#0c0d0c" stroke="#2c2e2c" stroke-width="1.4"/><path d="M10.8 4.6 L12.8 6 L10.8 7.4z" fill="#2c2e2c"/></svg><span class="t lb" style="left:22.0px;top:97.3px;transform:translateY(-50%) scaleX(0.915);transform-origin:0 50%;">Normal</span><svg class="p" style="left:123.2px;top:26.0px" width="15" height="12" viewBox="0 0 15 12"><ellipse cx="6.5" cy="6" rx="4.6" ry="4.2" fill="#fff"/><path d="M10.8 4.2 L13.6 6 L10.8 7.8z" fill="#fff"/></svg></div></div>
<div class="n res" style="left:1280px;top:763px;width:163px;height:483px"><div class="h tan" style="height:17.6px"></div><div class="in" style="left:0.4px;top:0.3px"><span class="t tr" style="left:10.3px;top:8.2px;transform:translateY(-50%) scaleX(0.905);transform-origin:0 50%;">M_Glass_Advanced</span><svg class="p" style="left:7.5px;top:25.2px" width="15" height="12" viewBox="0 0 15 12"><ellipse cx="6.5" cy="6" rx="4.6" ry="4.2" fill="#fff"/><path d="M10.8 4.2 L13.6 6 L10.8 7.8z" fill="#fff"/></svg><span class="t lb" style="left:24.6px;top:31.7px;transform:translateY(-50%) scaleX(0.869);transform-origin:0 50%;">Base Color</span><svg class="p" style="left:7.5px;top:48.2px" width="15" height="12" viewBox="0 0 15 12"><ellipse cx="6.5" cy="6" rx="4.6" ry="4.2" fill="#fff"/><path d="M10.8 4.2 L13.6 6 L10.8 7.8z" fill="#fff"/></svg><span class="t lb" style="left:24.6px;top:54.7px;transform:translateY(-50%) scaleX(0.915);transform-origin:0 50%;">Metallic</span><svg class="p" style="left:7.5px;top:71.2px" width="15" height="12" viewBox="0 0 15 12"><ellipse cx="6.5" cy="6" rx="3.9" ry="3.5" fill="#070707" stroke="#e4e4e4" stroke-width="1.45"/><path d="M10.9 4.5 L13.3 6 L10.9 7.5z" fill="#e4e4e4"/></svg><span class="t lb" style="left:24.6px;top:77.7px;transform:translateY(-50%) scaleX(0.912);transform-origin:0 50%;">Specular</span><svg class="p" style="left:7.5px;top:94.2px" width="15" height="12" viewBox="0 0 15 12"><ellipse cx="6.5" cy="6" rx="4.6" ry="4.2" fill="#fff"/><path d="M10.8 4.2 L13.6 6 L10.8 7.8z" fill="#fff"/></svg><span class="t lb" style="left:24.6px;top:100.7px;transform:translateY(-50%) scaleX(0.889);transform-origin:0 50%;">Roughness</span><svg class="p" style="left:7.5px;top:117.2px" width="15" height="12" viewBox="0 0 15 12"><ellipse cx="6.5" cy="6" rx="3.9" ry="3.5" fill="#070707" stroke="#e4e4e4" stroke-width="1.45"/><path d="M10.9 4.5 L13.3 6 L10.9 7.5z" fill="#e4e4e4"/></svg><span class="t lb" style="left:24.6px;top:123.7px;transform:translateY(-50%) scaleX(0.921);transform-origin:0 50%;">Anisotropy</span><svg class="p" style="left:7.5px;top:140.2px" width="15" height="12" viewBox="0 0 15 12"><ellipse cx="6.5" cy="6" rx="3.9" ry="3.5" fill="#070707" stroke="#e4e4e4" stroke-width="1.45"/><path d="M10.9 4.5 L13.3 6 L10.9 7.5z" fill="#e4e4e4"/></svg><span class="t lb" style="left:24.6px;top:146.7px;transform:translateY(-50%) scaleX(0.900);transform-origin:0 50%;">Emissive Color</span><svg class="p" style="left:7.5px;top:163.2px" width="15" height="12" viewBox="0 0 15 12"><ellipse cx="6.5" cy="6" rx="4.6" ry="4.2" fill="#fff"/><path d="M10.8 4.2 L13.6 6 L10.8 7.8z" fill="#fff"/></svg><span class="t lb" style="left:24.6px;top:169.7px;transform:translateY(-50%) scaleX(0.900);transform-origin:0 50%;">Opacity</span><svg class="p" style="left:7.5px;top:186.2px" width="15" height="12" viewBox="0 0 15 12"><ellipse cx="6.5" cy="6" rx="3.9" ry="3.5" fill="#070707" stroke="#323432" stroke-width="1.45"/><path d="M10.9 4.5 L13.3 6 L10.9 7.5z" fill="#323432"/></svg><span class="t lb" style="left:24.6px;top:192.7px;transform:translateY(-50%) scaleX(0.925);transform-origin:0 50%;color:#4a4c4a;text-shadow:none">Opacity Mask</span><svg class="p" style="left:7.5px;top:209.2px" width="15" height="12" viewBox="0 0 15 12"><ellipse cx="6.5" cy="6" rx="4.6" ry="4.2" fill="#fff"/><path d="M10.8 4.2 L13.6 6 L10.8 7.8z" fill="#fff"/></svg><span class="t lb" style="left:24.6px;top:215.7px;transform:translateY(-50%) scaleX(0.915);transform-origin:0 50%;">Normal</span><svg class="p" style="left:7.5px;top:232.2px" width="15" height="12" viewBox="0 0 15 12"><ellipse cx="6.5" cy="6" rx="3.9" ry="3.5" fill="#070707" stroke="#e4e4e4" stroke-width="1.45"/><path d="M10.9 4.5 L13.3 6 L10.9 7.5z" fill="#e4e4e4"/></svg><span class="t lb" style="left:24.6px;top:238.7px;transform:translateY(-50%) scaleX(0.927);transform-origin:0 50%;">Tangent</span><svg class="p" style="left:7.5px;top:255.2px" width="15" height="12" viewBox="0 0 15 12"><ellipse cx="6.5" cy="6" rx="3.9" ry="3.5" fill="#070707" stroke="#e4e4e4" stroke-width="1.45"/><path d="M10.9 4.5 L13.3 6 L10.9 7.5z" fill="#e4e4e4"/></svg><span class="t lb" style="left:24.6px;top:261.7px;transform:translateY(-50%) scaleX(0.914);transform-origin:0 50%;">World Position Offset</span><svg class="p" style="left:7.5px;top:278.2px" width="15" height="12" viewBox="0 0 15 12"><ellipse cx="6.5" cy="6" rx="3.9" ry="3.5" fill="#070707" stroke="#323432" stroke-width="1.45"/><path d="M10.9 4.5 L13.3 6 L10.9 7.5z" fill="#323432"/></svg><span class="t lb" style="left:24.6px;top:284.7px;transform:translateY(-50%) scaleX(0.906);transform-origin:0 50%;color:#4a4c4a;text-shadow:none">Subsurface Color</span><svg class="p" style="left:7.5px;top:301.2px" width="15" height="12" viewBox="0 0 15 12"><ellipse cx="6.5" cy="6" rx="3.9" ry="3.5" fill="#070707" stroke="#323432" stroke-width="1.45"/><path d="M10.9 4.5 L13.3 6 L10.9 7.5z" fill="#323432"/></svg><span class="t lb" style="left:24.6px;top:307.7px;transform:translateY(-50%) scaleX(0.900);transform-origin:0 50%;color:#4a4c4a;text-shadow:none">Custom Data 0</span><svg class="p" style="left:7.5px;top:324.2px" width="15" height="12" viewBox="0 0 15 12"><ellipse cx="6.5" cy="6" rx="3.9" ry="3.5" fill="#070707" stroke="#323432" stroke-width="1.45"/><path d="M10.9 4.5 L13.3 6 L10.9 7.5z" fill="#323432"/></svg><span class="t lb" style="left:24.6px;top:330.7px;transform:translateY(-50%) scaleX(0.885);transform-origin:0 50%;color:#4a4c4a;text-shadow:none">Custom Data 1</span><svg class="p" style="left:7.5px;top:347.2px" width="15" height="12" viewBox="0 0 15 12"><ellipse cx="6.5" cy="6" rx="3.9" ry="3.5" fill="#070707" stroke="#e4e4e4" stroke-width="1.45"/><path d="M10.9 4.5 L13.3 6 L10.9 7.5z" fill="#e4e4e4"/></svg><span class="t lb" style="left:24.6px;top:353.7px;transform:translateY(-50%) scaleX(0.912);transform-origin:0 50%;">Ambient Occlusion</span><svg class="p" style="left:7.5px;top:370.2px" width="15" height="12" viewBox="0 0 15 12"><ellipse cx="6.5" cy="6" rx="4.6" ry="4.2" fill="#fff"/><path d="M10.8 4.2 L13.6 6 L10.8 7.8z" fill="#fff"/></svg><span class="t lb" style="left:24.6px;top:376.7px;transform:translateY(-50%) scaleX(0.907);transform-origin:0 50%;">Refraction (Index Of Refraction)</span><svg class="p" style="left:7.5px;top:393.2px" width="15" height="12" viewBox="0 0 15 12"><ellipse cx="6.5" cy="6" rx="3.9" ry="3.5" fill="#070707" stroke="#323432" stroke-width="1.45"/><path d="M10.9 4.5 L13.3 6 L10.9 7.5z" fill="#323432"/></svg><span class="t lb" style="left:24.6px;top:399.7px;transform:translateY(-50%) scaleX(0.908);transform-origin:0 50%;color:#4a4c4a;text-shadow:none">Pixel Depth Offset</span><svg class="p" style="left:7.5px;top:416.2px" width="15" height="12" viewBox="0 0 15 12"><ellipse cx="6.5" cy="6" rx="3.9" ry="3.5" fill="#070707" stroke="#323432" stroke-width="1.45"/><path d="M10.9 4.5 L13.3 6 L10.9 7.5z" fill="#323432"/></svg><span class="t lb" style="left:24.6px;top:422.7px;transform:translateY(-50%) scaleX(0.899);transform-origin:0 50%;color:#4a4c4a;text-shadow:none">Shading Model</span><svg class="p" style="left:7.5px;top:439.2px" width="15" height="12" viewBox="0 0 15 12"><ellipse cx="6.5" cy="6" rx="3.9" ry="3.5" fill="#070707" stroke="#323432" stroke-width="1.45"/><path d="M10.9 4.5 L13.3 6 L10.9 7.5z" fill="#323432"/></svg><span class="t lb" style="left:24.6px;top:445.7px;transform:translateY(-50%) scaleX(0.920);transform-origin:0 50%;color:#4a4c4a;text-shadow:none">Surface Thickness</span><svg class="p" style="left:7.5px;top:462.2px" width="15" height="12" viewBox="0 0 15 12"><ellipse cx="6.5" cy="6" rx="3.9" ry="3.5" fill="#070707" stroke="#323432" stroke-width="1.45"/><path d="M10.9 4.5 L13.3 6 L10.9 7.5z" fill="#323432"/></svg><span class="t lb" style="left:24.6px;top:468.7px;transform:translateY(-50%) scaleX(0.908);transform-origin:0 50%;color:#4a4c4a;text-shadow:none">Front Material</span></div></div>
<svg class="w" width="1469" height="1850" viewBox="0 0 1469 1850" style="pointer-events:none"><path d="M278.6 95.2C351.8 95.2 317.6 202.6 390.8 202.6M278.6 95.2C395.5 95.2 430.1 177.6 547.0 177.6M276.5 251.2C323.1 251.2 344.2 225.6 390.8 225.6M456.3 202.6C502.5 202.6 500.8 154.8 547.0 154.8M658.5 154.8C1082.7 154.8 866.2 795.5 1290.4 795.5M437.0 478.7C566.0 478.7 261.8 248.6 390.8 248.6M270.8 477.3C283.3 477.3 294.5 478.7 307.0 478.7M437.0 478.7C477.8 478.7 445.9 551.3 486.7 551.3M438.2 647.4C478.7 647.4 446.2 574.3 486.7 574.3M546.7 551.3C582.9 551.3 618.2 550.3 654.4 550.3M616.0 479.4C644.8 479.4 625.6 527.3 654.4 527.3M713.8 527.3C750.3 527.3 726.7 587.3 763.2 587.3M702.9 623.4C727.4 623.4 738.7 610.1 763.2 610.1M874.4 587.3C1128.5 587.3 1036.3 933.5 1290.4 933.5M168.9 939.5C182.2 939.5 194.9 940.0 208.2 940.0M354.9 940.0C390.1 940.0 364.9 1000.3 400.1 1000.3M339.2 1108.4C387.9 1108.4 351.4 1023.3 400.1 1023.3M460.1 1000.3C496.2 1000.3 472.1 940.0 508.2 940.0M460.1 1000.3C511.7 1000.3 528.5 1035.1 580.1 1035.1M549.2 940.0C583.6 940.0 545.7 1012.3 580.1 1012.3M716.3 1012.3C751.6 1012.3 724.8 950.1 760.1 950.1M711.1 856.4C743.3 856.4 727.9 904.1 760.1 904.1M711.1 928.4C727.9 928.4 743.3 927.1 760.1 927.1M825.3 904.1C867.6 904.1 873.8 940.1 916.1 940.1M879.3 1048.4C920.1 1048.4 875.3 962.9 916.1 962.9M1043.1 940.1C1150.7 940.1 1182.8 864.5 1290.4 864.5M1232.3 832.3C1256.3 832.3 1266.4 818.5 1290.4 818.5M530.3 1265.3C571.1 1265.3 600.6 1254.1 641.4 1254.1M713.1 1254.1C745.1 1254.1 765.4 1265.8 797.4 1265.8M725.1 1362.1C773.6 1362.1 748.9 1288.8 797.4 1288.8M856.2 1265.8C904.6 1265.8 916.9 1301.8 965.3 1301.8M897.6 1421.9C952.5 1421.9 910.4 1324.8 965.3 1324.8M1021.5 1301.8C1218.6 1301.8 1093.3 979.5 1290.4 979.5M792.7 1549.2C859.3 1549.2 889.6 1585.4 956.2 1585.4M817.9 1645.4C876.3 1645.4 897.8 1608.4 956.2 1608.4M810.0 1729.2C891.3 1729.2 874.9 1631.4 956.2 1631.4M1021.3 1585.4C1259.3 1585.4 1052.4 1140.5 1290.4 1140.5" fill="none" stroke="#ffffff" stroke-opacity="0.26" stroke-width="1.4"/></svg>
</body></html>
